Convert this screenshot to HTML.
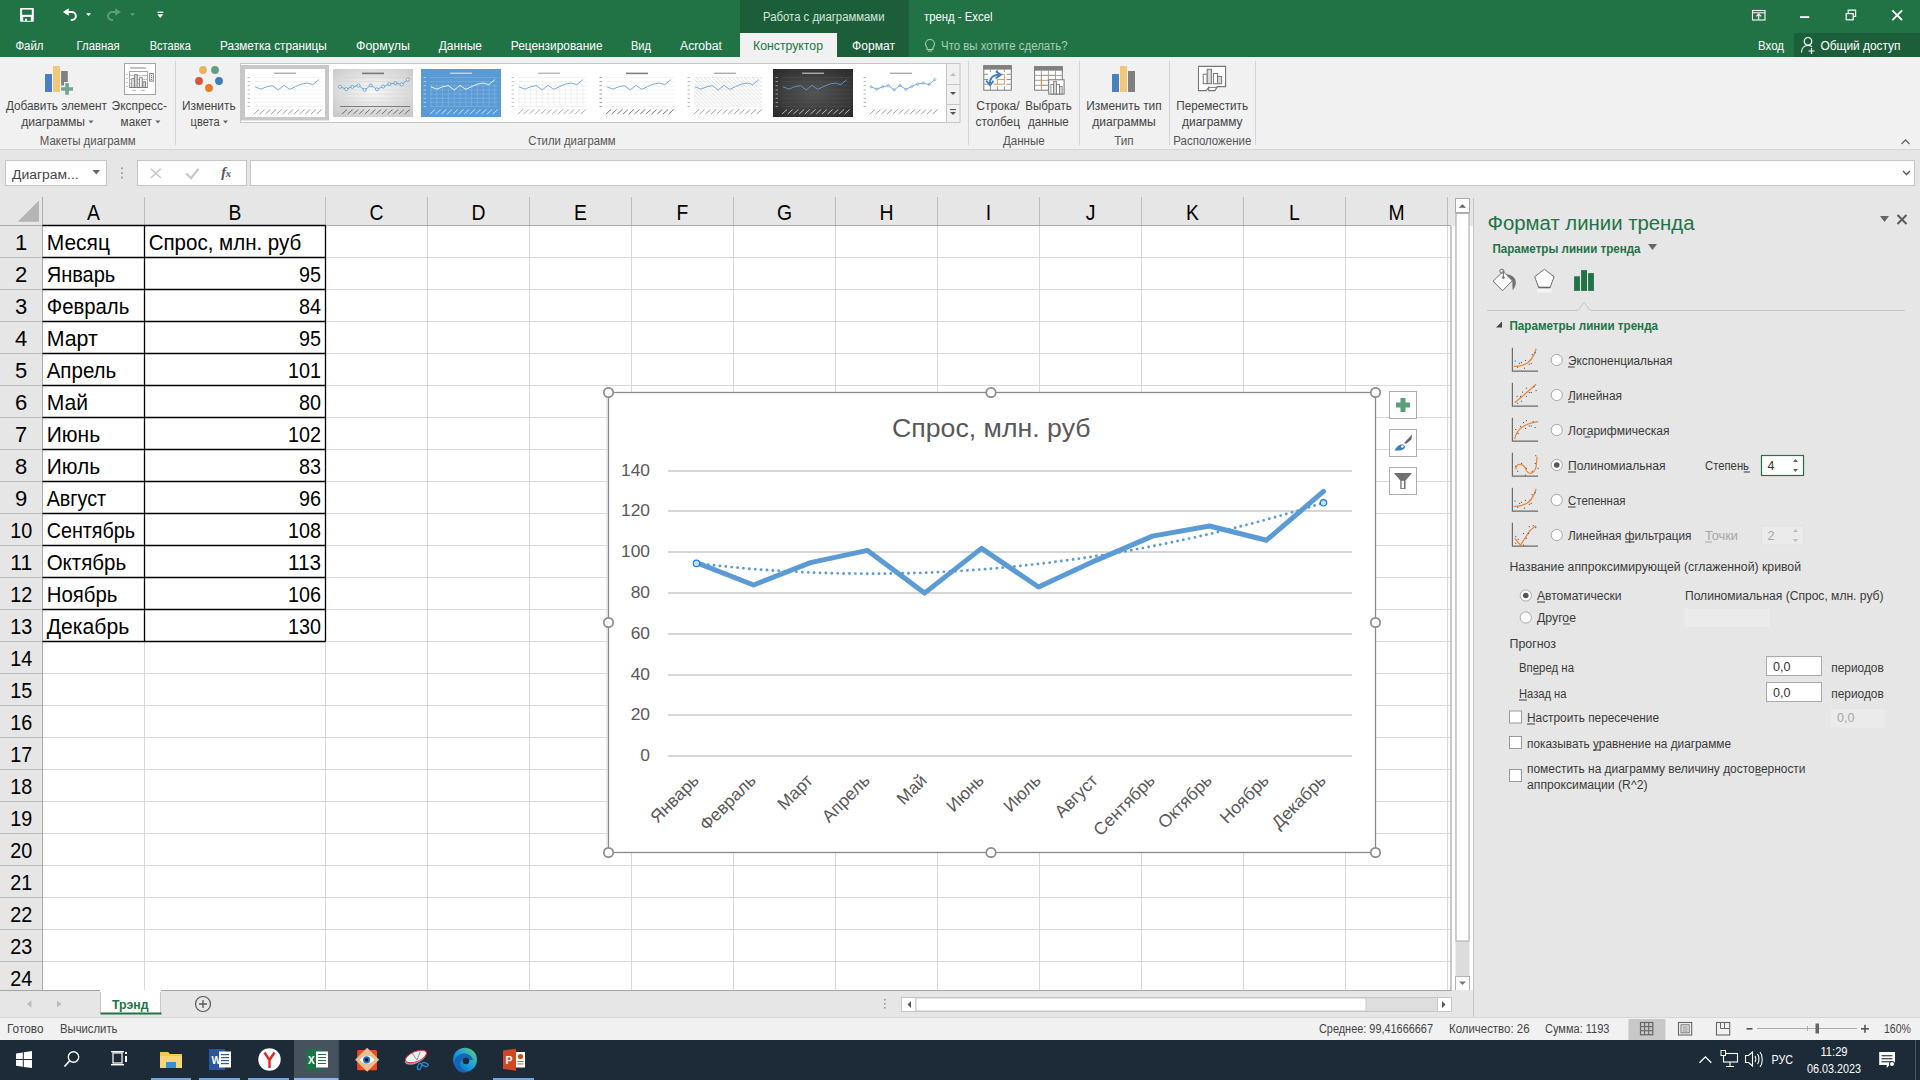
<!DOCTYPE html>
<html><head><meta charset="utf-8"><title>Excel</title>
<style>html,body{margin:0;padding:0;width:1920px;height:1080px;overflow:hidden;background:#fff}
svg{display:block;font-family:"Liberation Sans",sans-serif}</style></head>
<body><svg width="1920" height="1080" viewBox="0 0 1920 1080">
<rect x="0" y="0" width="1920" height="57" fill="#217346" />
<rect x="740" y="0" width="169" height="57" fill="#1b5e39" />
<rect x="1794" y="33" width="126" height="24" fill="#1b5e39" />
<rect x="740" y="33" width="97" height="24" fill="#f1f1f1" />
<rect x="20.1" y="8" width="13.7" height="13.7" fill="#fff" rx="0.8"/>
<rect x="22.1" y="9.6" width="9.7" height="5.2" fill="#217346" />
<rect x="23.2" y="16.9" width="7.7" height="3.9" fill="#217346" />
<rect x="25" y="18.7" width="1.9" height="2.2" fill="#fff" />
<path d="M62.9 11.9l5.8-3.7v7.5z" fill="#fff" />
<path d="M67.5 11.9h4.3a4.05 4.05 0 0 1 0 8.1h-1" fill="none" stroke="#fff" stroke-width="2" />
<path d="M86 13.3h5.1l-2.55 2.6z" fill="#fff" />
<path d="M121 11.9l-5.8-3.7v7.5z" fill="#5c9f77" />
<path d="M116.4 11.9h-4.3a4.05 4.05 0 0 0 0 8.1h1" fill="none" stroke="#5c9f77" stroke-width="2" />
<path d="M129.9 13.3h5.1l-2.55 2.6z" fill="#5c9f77" />
<rect x="157.5" y="11.6" width="5.8" height="1.3" fill="#fff" />
<path d="M157.3 14.3h6l-3 3.6z" fill="#fff" />
<text x="763" y="21" font-size="12" fill="#d5e8dc" textLength="121.5" lengthAdjust="spacingAndGlyphs" >Работа с диаграммами</text>
<text x="924" y="21" font-size="12" fill="#fff" textLength="68.5" lengthAdjust="spacingAndGlyphs" >тренд - Excel</text>
<rect x="1752.5" y="10.5" width="12.5" height="9.5" fill="none" stroke="#fff" stroke-width="1.1" />
<line x1="1752.5" y1="12.8" x2="1765" y2="12.8" stroke="#fff" stroke-width="1" />
<path d="M1758.7 19.5v-5M1756.3 16.3l2.4-2.5 2.4 2.5" fill="none" stroke="#fff" stroke-width="1.1" />
<rect x="1800" y="16.2" width="9.2" height="1.8" fill="#fff" />
<rect x="1846.2" y="13.6" width="7" height="6.2" fill="none" stroke="#fff" stroke-width="1.2" />
<path d="M1848.2 13.2v-3h7.4v6.2h-2.2" fill="none" stroke="#fff" stroke-width="1.2" />
<path d="M1892.3 10.3l9.8 9.8M1902.1 10.3l-9.8 9.8" fill="none" stroke="#fff" stroke-width="1.9" />
<text x="15.4" y="49.5" font-size="12.5" fill="#fff" textLength="28.1" lengthAdjust="spacingAndGlyphs" >Файл</text>
<text x="76.6" y="49.5" font-size="12.5" fill="#fff" textLength="43.0" lengthAdjust="spacingAndGlyphs" >Главная</text>
<text x="149.7" y="49.5" font-size="12.5" fill="#fff" textLength="41.1" lengthAdjust="spacingAndGlyphs" >Вставка</text>
<text x="220" y="49.5" font-size="12.5" fill="#fff" textLength="106.8" lengthAdjust="spacingAndGlyphs" >Разметка страницы</text>
<text x="356" y="49.5" font-size="12.5" fill="#fff" textLength="54" lengthAdjust="spacingAndGlyphs" >Формулы</text>
<text x="438.75" y="49.5" font-size="12.5" fill="#fff" textLength="43.2" lengthAdjust="spacingAndGlyphs" >Данные</text>
<text x="510.75" y="49.5" font-size="12.5" fill="#fff" textLength="91.8" lengthAdjust="spacingAndGlyphs" >Рецензирование</text>
<text x="631" y="49.5" font-size="12.5" fill="#fff" textLength="20" lengthAdjust="spacingAndGlyphs" >Вид</text>
<text x="680" y="49.5" font-size="12.5" fill="#fff" textLength="42" lengthAdjust="spacingAndGlyphs" >Acrobat</text>
<text x="852" y="49.5" font-size="12.5" fill="#fff" textLength="43" lengthAdjust="spacingAndGlyphs" >Формат</text>
<text x="753" y="49.5" font-size="12.5" fill="#217346" textLength="70" lengthAdjust="spacingAndGlyphs" >Конструктор</text>
<path d="M930 39.5a4.5 4.5 0 0 1 4.5 4.5c0 1.8-1.3 2.6-1.6 4v1.5h-5.8v-1.5c-.3-1.4-1.6-2.2-1.6-4a4.5 4.5 0 0 1 4.5-4.5zM927.8 51h4.4" fill="none" stroke="#a9cdb7" stroke-width="1.1" />
<text x="941" y="49.5" font-size="12.5" fill="#a9cdb7" textLength="126.5" lengthAdjust="spacingAndGlyphs" >Что вы хотите сделать?</text>
<text x="1758" y="49.5" font-size="12.5" fill="#fff" textLength="26" lengthAdjust="spacingAndGlyphs" >Вход</text>
<path d="M1808 37.5a3.8 3.8 0 1 1 0 7.6a3.8 3.8 0 1 1 0-7.6M1801.5 52.5c0-4 2.5-7 6.5-7 2 0 3 .5 4 1.3M1811.5 48v6M1808.5 51h6" fill="none" stroke="#fff" stroke-width="1.2" />
<text x="1820.5" y="49.5" font-size="12.5" fill="#fff" textLength="80" lengthAdjust="spacingAndGlyphs" >Общий доступ</text>
<rect x="0" y="57" width="1920" height="92" fill="#f1f1f1" />
<line x1="0" y1="149.5" x2="1920" y2="149.5" stroke="#d6d6d6" stroke-width="1" />
<line x1="175.5" y1="61" x2="175.5" y2="145" stroke="#d4d4d4" stroke-width="1" />
<line x1="968.5" y1="61" x2="968.5" y2="145" stroke="#d4d4d4" stroke-width="1" />
<line x1="1079.5" y1="61" x2="1079.5" y2="145" stroke="#d4d4d4" stroke-width="1" />
<line x1="1169.5" y1="61" x2="1169.5" y2="145" stroke="#d4d4d4" stroke-width="1" />
<line x1="1255.5" y1="61" x2="1255.5" y2="145" stroke="#d4d4d4" stroke-width="1" />
<rect x="45" y="74" width="7" height="18" fill="#4a7fc0" />
<rect x="53" y="66" width="7" height="26" fill="#f0c87c" />
<path d="M61.1 71.1h6.7v10.8h-3.8v3.7h-2.9z" fill="#808080" />
<rect x="65.2" y="83.1" width="3.7" height="11.7" fill="#72a692" />
<rect x="61.1" y="87.2" width="11.9" height="3.5" fill="#72a692" />
<text x="5.9" y="109.5" font-size="12" fill="#444" textLength="101.0" lengthAdjust="spacingAndGlyphs" >Добавить элемент</text>
<text x="21.25" y="125.5" font-size="12" fill="#444" textLength="63.8" lengthAdjust="spacingAndGlyphs" >диаграммы</text>
<path d="M88.5 120.5h5.0l-2.5 3.0z" fill="#666" />
<rect x="124.5" y="63.5" width="31" height="31" fill="#fff" stroke="#a6a6a6" stroke-width="1" />
<rect x="130.2" y="67.2" width="15.5" height="1.5" fill="#aaa" />
<rect x="129.5" y="71.5" width="18" height="16" fill="none" stroke="#a6a6a6" stroke-width="1" />
<line x1="130" y1="75.6" x2="147" y2="75.6" stroke="#aaa" stroke-width="0.8" />
<line x1="130" y1="79.4" x2="147" y2="79.4" stroke="#aaa" stroke-width="0.8" />
<line x1="130" y1="83.3" x2="147" y2="83.3" stroke="#aaa" stroke-width="0.8" />
<line x1="129.4" y1="87.4" x2="147.4" y2="87.4" stroke="#777" stroke-width="1" />
<rect x="131.8" y="78.6" width="2.4" height="8.8" fill="#fff" stroke="#777" stroke-width="0.9" />
<rect x="134.6" y="74.7" width="2.6" height="12.7" fill="#ddd" stroke="#777" stroke-width="0.9" />
<rect x="139.6" y="77.7" width="2.6" height="9.7" fill="#fff" stroke="#777" stroke-width="0.9" />
<rect x="142.8" y="81.8" width="2.6" height="5.6" fill="#ddd" stroke="#777" stroke-width="0.9" />
<rect x="126.1" y="74.0" width="1.7" height="0.8" fill="#aaa" />
<rect x="126.1" y="78.1" width="1.7" height="0.8" fill="#aaa" />
<rect x="126.1" y="82.0" width="1.7" height="0.8" fill="#aaa" />
<rect x="126.1" y="86.1" width="1.7" height="0.8" fill="#aaa" />
<rect x="132.2" y="90" width="3.7" height="0.8" fill="#aaa" />
<rect x="141.1" y="90" width="3.7" height="0.8" fill="#aaa" />
<rect x="149.7" y="73.5" width="3.6" height="7.6" fill="#fff" stroke="#777" stroke-width="0.9" />
<circle cx="151.5" cy="75.4" r="0.55" fill="#666"/>
<circle cx="151.5" cy="77.4" r="0.55" fill="#666"/>
<circle cx="151.5" cy="79.4" r="0.55" fill="#666"/>
<text x="111.6" y="109.5" font-size="12" fill="#444" textLength="55.4" lengthAdjust="spacingAndGlyphs" >Экспресс-</text>
<text x="120.6" y="125.5" font-size="12" fill="#444" textLength="31.3" lengthAdjust="spacingAndGlyphs" >макет</text>
<path d="M155.4 120.5h5.0l-2.5 3.0z" fill="#666" />
<circle cx="203" cy="70" r="3.9" fill="#eab15f"/>
<circle cx="215" cy="70" r="3.9" fill="#5f9f84"/>
<circle cx="199" cy="81" r="3.9" fill="#d9543a"/>
<circle cx="219" cy="81" r="3.9" fill="#3f7bc1"/>
<circle cx="209" cy="88" r="3.9" fill="#e97a23"/>
<text x="182" y="109.5" font-size="12" fill="#444" textLength="53.6" lengthAdjust="spacingAndGlyphs" >Изменить</text>
<text x="190.6" y="125.5" font-size="12" fill="#444" textLength="29.0" lengthAdjust="spacingAndGlyphs" >цвета</text>
<path d="M223 120.5h5l-2.5 3.0z" fill="#666" />
<text x="39.75" y="145" font-size="12" fill="#555" textLength="95.9" lengthAdjust="spacingAndGlyphs" >Макеты диаграмм</text>
<text x="528.25" y="145" font-size="12" fill="#555" textLength="87.3" lengthAdjust="spacingAndGlyphs" >Стили диаграмм</text>
<text x="1003" y="145" font-size="12" fill="#555" textLength="41.7" lengthAdjust="spacingAndGlyphs" >Данные</text>
<text x="1114.2" y="145" font-size="12" fill="#555" textLength="19.5" lengthAdjust="spacingAndGlyphs" >Тип</text>
<text x="1173.3" y="145" font-size="12" fill="#555" textLength="78" lengthAdjust="spacingAndGlyphs" >Расположение</text>
<rect x="240.5" y="63.5" width="719" height="59" fill="#fff" stroke="#c6c6c6" stroke-width="1" />
<rect x="946.5" y="63.5" width="13.5" height="59" fill="#f1f1f1" stroke="#c6c6c6" stroke-width="1" />
<line x1="946.5" y1="84.5" x2="960" y2="84.5" stroke="#c6c6c6" stroke-width="1" />
<line x1="946.5" y1="104.5" x2="960" y2="104.5" stroke="#c6c6c6" stroke-width="1" />
<path d="M950 76h6l-3-3z" fill="#bbb" />
<path d="M950 92h6l-3 3z" fill="#555" />
<rect x="950" y="109" width="6" height="1.1" fill="#555" />
<path d="M950 112h6l-3 3z" fill="#555" />
<rect x="241" y="65" width="88" height="55.5" fill="#c8c8c8" />
<defs><radialGradient id="g2" cx="50%" cy="45%" r="70%"><stop offset="0" stop-color="#fafafa"/><stop offset="1" stop-color="#c8c8c8"/></radialGradient><radialGradient id="g7" cx="50%" cy="50%" r="70%"><stop offset="0" stop-color="#555"/><stop offset="1" stop-color="#2a2a2a"/></radialGradient></defs>
<rect x="245" y="69" width="80" height="48" fill="#fff" />
<rect x="274.0" y="72.6" width="22" height="1.3" fill="#888" opacity="0.75"/>
<line x1="254" y1="106.5" x2="322" y2="106.5" stroke="#e6e6e6" stroke-width="0.5" />
<line x1="254" y1="102.35714285714286" x2="322" y2="102.35714285714286" stroke="#e6e6e6" stroke-width="0.5" />
<line x1="254" y1="98.21428571428571" x2="322" y2="98.21428571428571" stroke="#e6e6e6" stroke-width="0.5" />
<line x1="254" y1="94.07142857142857" x2="322" y2="94.07142857142857" stroke="#e6e6e6" stroke-width="0.5" />
<line x1="254" y1="89.92857142857143" x2="322" y2="89.92857142857143" stroke="#e6e6e6" stroke-width="0.5" />
<line x1="254" y1="85.78571428571428" x2="322" y2="85.78571428571428" stroke="#e6e6e6" stroke-width="0.5" />
<line x1="254" y1="81.64285714285714" x2="322" y2="81.64285714285714" stroke="#e6e6e6" stroke-width="0.5" />
<line x1="254" y1="77.5" x2="322" y2="77.5" stroke="#e6e6e6" stroke-width="0.5" />
<polyline points="255.0,86.8 260.8,89.1 266.6,86.8 272.4,85.6 278.2,89.9 284.0,85.4 289.8,89.3 295.6,86.6 301.4,84.1 307.2,83.1 313.0,84.5 318.8,79.6" fill="none" stroke="#6aa1d8" stroke-width="0.9"/>
<line x1="254.0" y1="114" x2="259.0" y2="109.5" stroke="#888" stroke-width="0.8" />
<line x1="259.7" y1="114" x2="264.7" y2="109.5" stroke="#888" stroke-width="0.8" />
<line x1="265.4" y1="114" x2="270.4" y2="109.5" stroke="#888" stroke-width="0.8" />
<line x1="271.1" y1="114" x2="276.1" y2="109.5" stroke="#888" stroke-width="0.8" />
<line x1="276.8" y1="114" x2="281.8" y2="109.5" stroke="#888" stroke-width="0.8" />
<line x1="282.5" y1="114" x2="287.5" y2="109.5" stroke="#888" stroke-width="0.8" />
<line x1="288.2" y1="114" x2="293.2" y2="109.5" stroke="#888" stroke-width="0.8" />
<line x1="293.9" y1="114" x2="298.9" y2="109.5" stroke="#888" stroke-width="0.8" />
<line x1="299.6" y1="114" x2="304.6" y2="109.5" stroke="#888" stroke-width="0.8" />
<line x1="305.3" y1="114" x2="310.3" y2="109.5" stroke="#888" stroke-width="0.8" />
<line x1="311.0" y1="114" x2="316.0" y2="109.5" stroke="#888" stroke-width="0.8" />
<line x1="316.7" y1="114" x2="321.7" y2="109.5" stroke="#888" stroke-width="0.8" />
<rect x="247.5" y="106.1" width="2.5" height="0.8" fill="#888" opacity="0.7"/>
<rect x="247.5" y="101.95714285714286" width="2.5" height="0.8" fill="#888" opacity="0.7"/>
<rect x="247.5" y="97.8142857142857" width="2.5" height="0.8" fill="#888" opacity="0.7"/>
<rect x="247.5" y="93.67142857142856" width="2.5" height="0.8" fill="#888" opacity="0.7"/>
<rect x="247.5" y="89.52857142857142" width="2.5" height="0.8" fill="#888" opacity="0.7"/>
<rect x="247.5" y="85.38571428571427" width="2.5" height="0.8" fill="#888" opacity="0.7"/>
<rect x="247.5" y="81.24285714285713" width="2.5" height="0.8" fill="#888" opacity="0.7"/>
<rect x="247.5" y="77.1" width="2.5" height="0.8" fill="#888" opacity="0.7"/>
<rect x="333" y="69" width="80" height="48" fill="url(#g2)"/>
<rect x="362.0" y="72.6" width="22" height="1.6" fill="#555" opacity="0.75"/>
<line x1="342" y1="106.5" x2="410" y2="106.5" stroke="#d0d0d0" stroke-width="0.5" />
<line x1="342" y1="102.35714285714286" x2="410" y2="102.35714285714286" stroke="#d0d0d0" stroke-width="0.5" />
<line x1="342" y1="98.21428571428571" x2="410" y2="98.21428571428571" stroke="#d0d0d0" stroke-width="0.5" />
<line x1="342" y1="94.07142857142857" x2="410" y2="94.07142857142857" stroke="#d0d0d0" stroke-width="0.5" />
<line x1="342" y1="89.92857142857143" x2="410" y2="89.92857142857143" stroke="#d0d0d0" stroke-width="0.5" />
<line x1="342" y1="85.78571428571428" x2="410" y2="85.78571428571428" stroke="#d0d0d0" stroke-width="0.5" />
<line x1="342" y1="81.64285714285714" x2="410" y2="81.64285714285714" stroke="#d0d0d0" stroke-width="0.5" />
<line x1="342" y1="77.5" x2="410" y2="77.5" stroke="#d0d0d0" stroke-width="0.5" />
<line x1="340" y1="106.5" x2="410" y2="106.5" stroke="#666" stroke-width="0.8" />
<polyline points="340.0,86.8 346.2,89.1 352.3,86.8 358.5,85.6 364.6,89.9 370.8,85.4 377.0,89.3 383.1,86.6 389.3,84.1 395.4,83.1 401.6,84.5 407.8,79.6" fill="none" stroke="#5b9bd5" stroke-width="0.9"/>
<circle cx="340.0" cy="86.8" r="1.5" fill="#fff" stroke="#5b9bd5" stroke-width="0.9"/>
<circle cx="346.2" cy="89.1" r="1.5" fill="#fff" stroke="#5b9bd5" stroke-width="0.9"/>
<circle cx="352.3" cy="86.8" r="1.5" fill="#fff" stroke="#5b9bd5" stroke-width="0.9"/>
<circle cx="358.5" cy="85.6" r="1.5" fill="#fff" stroke="#5b9bd5" stroke-width="0.9"/>
<circle cx="364.6" cy="89.9" r="1.5" fill="#fff" stroke="#5b9bd5" stroke-width="0.9"/>
<circle cx="370.8" cy="85.4" r="1.5" fill="#fff" stroke="#5b9bd5" stroke-width="0.9"/>
<circle cx="377.0" cy="89.3" r="1.5" fill="#fff" stroke="#5b9bd5" stroke-width="0.9"/>
<circle cx="383.1" cy="86.6" r="1.5" fill="#fff" stroke="#5b9bd5" stroke-width="0.9"/>
<circle cx="389.3" cy="84.1" r="1.5" fill="#fff" stroke="#5b9bd5" stroke-width="0.9"/>
<circle cx="395.4" cy="83.1" r="1.5" fill="#fff" stroke="#5b9bd5" stroke-width="0.9"/>
<circle cx="401.6" cy="84.5" r="1.5" fill="#fff" stroke="#5b9bd5" stroke-width="0.9"/>
<circle cx="407.8" cy="79.6" r="1.5" fill="#fff" stroke="#5b9bd5" stroke-width="0.9"/>
<line x1="342.0" y1="114" x2="347.0" y2="109.5" stroke="#555" stroke-width="0.8" />
<line x1="347.7" y1="114" x2="352.7" y2="109.5" stroke="#555" stroke-width="0.8" />
<line x1="353.4" y1="114" x2="358.4" y2="109.5" stroke="#555" stroke-width="0.8" />
<line x1="359.1" y1="114" x2="364.1" y2="109.5" stroke="#555" stroke-width="0.8" />
<line x1="364.8" y1="114" x2="369.8" y2="109.5" stroke="#555" stroke-width="0.8" />
<line x1="370.5" y1="114" x2="375.5" y2="109.5" stroke="#555" stroke-width="0.8" />
<line x1="376.2" y1="114" x2="381.2" y2="109.5" stroke="#555" stroke-width="0.8" />
<line x1="381.9" y1="114" x2="386.9" y2="109.5" stroke="#555" stroke-width="0.8" />
<line x1="387.6" y1="114" x2="392.6" y2="109.5" stroke="#555" stroke-width="0.8" />
<line x1="393.3" y1="114" x2="398.3" y2="109.5" stroke="#555" stroke-width="0.8" />
<line x1="399.0" y1="114" x2="404.0" y2="109.5" stroke="#555" stroke-width="0.8" />
<line x1="404.7" y1="114" x2="409.7" y2="109.5" stroke="#555" stroke-width="0.8" />
<rect x="421" y="69" width="80" height="48" fill="#5b9bd5" />
<rect x="450.0" y="72.6" width="22" height="1.3" fill="#eef" opacity="0.75"/>
<line x1="430" y1="106.5" x2="498" y2="106.5" stroke="#8cb9e4" stroke-width="0.5" />
<line x1="430" y1="102.35714285714286" x2="498" y2="102.35714285714286" stroke="#8cb9e4" stroke-width="0.5" />
<line x1="430" y1="98.21428571428571" x2="498" y2="98.21428571428571" stroke="#8cb9e4" stroke-width="0.5" />
<line x1="430" y1="94.07142857142857" x2="498" y2="94.07142857142857" stroke="#8cb9e4" stroke-width="0.5" />
<line x1="430" y1="89.92857142857143" x2="498" y2="89.92857142857143" stroke="#8cb9e4" stroke-width="0.5" />
<line x1="430" y1="85.78571428571428" x2="498" y2="85.78571428571428" stroke="#8cb9e4" stroke-width="0.5" />
<line x1="430" y1="81.64285714285714" x2="498" y2="81.64285714285714" stroke="#8cb9e4" stroke-width="0.5" />
<line x1="430" y1="77.5" x2="498" y2="77.5" stroke="#8cb9e4" stroke-width="0.5" />
<line x1="431.0" y1="84" x2="431.0" y2="106.5" stroke="#8cb9e4" stroke-width="0.5" />
<line x1="436.8" y1="84" x2="436.8" y2="106.5" stroke="#8cb9e4" stroke-width="0.5" />
<line x1="442.6" y1="84" x2="442.6" y2="106.5" stroke="#8cb9e4" stroke-width="0.5" />
<line x1="448.4" y1="84" x2="448.4" y2="106.5" stroke="#8cb9e4" stroke-width="0.5" />
<line x1="454.2" y1="84" x2="454.2" y2="106.5" stroke="#8cb9e4" stroke-width="0.5" />
<line x1="460.0" y1="84" x2="460.0" y2="106.5" stroke="#8cb9e4" stroke-width="0.5" />
<line x1="465.8" y1="84" x2="465.8" y2="106.5" stroke="#8cb9e4" stroke-width="0.5" />
<line x1="471.6" y1="84" x2="471.6" y2="106.5" stroke="#8cb9e4" stroke-width="0.5" />
<line x1="477.4" y1="84" x2="477.4" y2="106.5" stroke="#8cb9e4" stroke-width="0.5" />
<line x1="483.2" y1="84" x2="483.2" y2="106.5" stroke="#8cb9e4" stroke-width="0.5" />
<line x1="489.0" y1="84" x2="489.0" y2="106.5" stroke="#8cb9e4" stroke-width="0.5" />
<line x1="494.8" y1="84" x2="494.8" y2="106.5" stroke="#8cb9e4" stroke-width="0.5" />
<polyline points="431.0,86.8 436.8,89.1 442.6,86.8 448.4,85.6 454.2,89.9 460.0,85.4 465.8,89.3 471.6,86.6 477.4,84.1 483.2,83.1 489.0,84.5 494.8,79.6" fill="none" stroke="#fff" stroke-width="0.9"/>
<line x1="430.0" y1="114" x2="435.0" y2="109.5" stroke="#eef" stroke-width="0.8" />
<line x1="435.7" y1="114" x2="440.7" y2="109.5" stroke="#eef" stroke-width="0.8" />
<line x1="441.4" y1="114" x2="446.4" y2="109.5" stroke="#eef" stroke-width="0.8" />
<line x1="447.1" y1="114" x2="452.1" y2="109.5" stroke="#eef" stroke-width="0.8" />
<line x1="452.8" y1="114" x2="457.8" y2="109.5" stroke="#eef" stroke-width="0.8" />
<line x1="458.5" y1="114" x2="463.5" y2="109.5" stroke="#eef" stroke-width="0.8" />
<line x1="464.2" y1="114" x2="469.2" y2="109.5" stroke="#eef" stroke-width="0.8" />
<line x1="469.9" y1="114" x2="474.9" y2="109.5" stroke="#eef" stroke-width="0.8" />
<line x1="475.6" y1="114" x2="480.6" y2="109.5" stroke="#eef" stroke-width="0.8" />
<line x1="481.3" y1="114" x2="486.3" y2="109.5" stroke="#eef" stroke-width="0.8" />
<line x1="487.0" y1="114" x2="492.0" y2="109.5" stroke="#eef" stroke-width="0.8" />
<line x1="492.7" y1="114" x2="497.7" y2="109.5" stroke="#eef" stroke-width="0.8" />
<rect x="423.5" y="106.1" width="2.5" height="0.8" fill="#eef" opacity="0.7"/>
<rect x="423.5" y="101.95714285714286" width="2.5" height="0.8" fill="#eef" opacity="0.7"/>
<rect x="423.5" y="97.8142857142857" width="2.5" height="0.8" fill="#eef" opacity="0.7"/>
<rect x="423.5" y="93.67142857142856" width="2.5" height="0.8" fill="#eef" opacity="0.7"/>
<rect x="423.5" y="89.52857142857142" width="2.5" height="0.8" fill="#eef" opacity="0.7"/>
<rect x="423.5" y="85.38571428571427" width="2.5" height="0.8" fill="#eef" opacity="0.7"/>
<rect x="423.5" y="81.24285714285713" width="2.5" height="0.8" fill="#eef" opacity="0.7"/>
<rect x="423.5" y="77.1" width="2.5" height="0.8" fill="#eef" opacity="0.7"/>
<rect x="509" y="69" width="80" height="48" fill="#fff" />
<rect x="538.0" y="72.6" width="22" height="1.3" fill="#999" opacity="0.75"/>
<line x1="518" y1="106.5" x2="586" y2="106.5" stroke="#e4e4e4" stroke-width="0.5" />
<line x1="518" y1="102.35714285714286" x2="586" y2="102.35714285714286" stroke="#e4e4e4" stroke-width="0.5" />
<line x1="518" y1="98.21428571428571" x2="586" y2="98.21428571428571" stroke="#e4e4e4" stroke-width="0.5" />
<line x1="518" y1="94.07142857142857" x2="586" y2="94.07142857142857" stroke="#e4e4e4" stroke-width="0.5" />
<line x1="518" y1="89.92857142857143" x2="586" y2="89.92857142857143" stroke="#e4e4e4" stroke-width="0.5" />
<line x1="518" y1="85.78571428571428" x2="586" y2="85.78571428571428" stroke="#e4e4e4" stroke-width="0.5" />
<line x1="518" y1="81.64285714285714" x2="586" y2="81.64285714285714" stroke="#e4e4e4" stroke-width="0.5" />
<line x1="518" y1="77.5" x2="586" y2="77.5" stroke="#e4e4e4" stroke-width="0.5" />
<line x1="519.0" y1="84" x2="519.0" y2="106.5" stroke="#e4e4e4" stroke-width="0.5" />
<line x1="524.8" y1="84" x2="524.8" y2="106.5" stroke="#e4e4e4" stroke-width="0.5" />
<line x1="530.6" y1="84" x2="530.6" y2="106.5" stroke="#e4e4e4" stroke-width="0.5" />
<line x1="536.4" y1="84" x2="536.4" y2="106.5" stroke="#e4e4e4" stroke-width="0.5" />
<line x1="542.2" y1="84" x2="542.2" y2="106.5" stroke="#e4e4e4" stroke-width="0.5" />
<line x1="548.0" y1="84" x2="548.0" y2="106.5" stroke="#e4e4e4" stroke-width="0.5" />
<line x1="553.8" y1="84" x2="553.8" y2="106.5" stroke="#e4e4e4" stroke-width="0.5" />
<line x1="559.6" y1="84" x2="559.6" y2="106.5" stroke="#e4e4e4" stroke-width="0.5" />
<line x1="565.4" y1="84" x2="565.4" y2="106.5" stroke="#e4e4e4" stroke-width="0.5" />
<line x1="571.2" y1="84" x2="571.2" y2="106.5" stroke="#e4e4e4" stroke-width="0.5" />
<line x1="577.0" y1="84" x2="577.0" y2="106.5" stroke="#e4e4e4" stroke-width="0.5" />
<line x1="582.8" y1="84" x2="582.8" y2="106.5" stroke="#e4e4e4" stroke-width="0.5" />
<polyline points="519.0,86.8 524.8,89.1 530.6,86.8 536.4,85.6 542.2,89.9 548.0,85.4 553.8,89.3 559.6,86.6 565.4,84.1 571.2,83.1 577.0,84.5 582.8,79.6" fill="none" stroke="#6aa1d8" stroke-width="0.9"/>
<line x1="518.0" y1="114" x2="523.0" y2="109.5" stroke="#999" stroke-width="0.8" />
<line x1="523.7" y1="114" x2="528.7" y2="109.5" stroke="#999" stroke-width="0.8" />
<line x1="529.4" y1="114" x2="534.4" y2="109.5" stroke="#999" stroke-width="0.8" />
<line x1="535.1" y1="114" x2="540.1" y2="109.5" stroke="#999" stroke-width="0.8" />
<line x1="540.8" y1="114" x2="545.8" y2="109.5" stroke="#999" stroke-width="0.8" />
<line x1="546.5" y1="114" x2="551.5" y2="109.5" stroke="#999" stroke-width="0.8" />
<line x1="552.2" y1="114" x2="557.2" y2="109.5" stroke="#999" stroke-width="0.8" />
<line x1="557.9" y1="114" x2="562.9" y2="109.5" stroke="#999" stroke-width="0.8" />
<line x1="563.6" y1="114" x2="568.6" y2="109.5" stroke="#999" stroke-width="0.8" />
<line x1="569.3" y1="114" x2="574.3" y2="109.5" stroke="#999" stroke-width="0.8" />
<line x1="575.0" y1="114" x2="580.0" y2="109.5" stroke="#999" stroke-width="0.8" />
<line x1="580.7" y1="114" x2="585.7" y2="109.5" stroke="#999" stroke-width="0.8" />
<rect x="511.5" y="106.1" width="2.5" height="0.8" fill="#999" opacity="0.7"/>
<rect x="511.5" y="101.95714285714286" width="2.5" height="0.8" fill="#999" opacity="0.7"/>
<rect x="511.5" y="97.8142857142857" width="2.5" height="0.8" fill="#999" opacity="0.7"/>
<rect x="511.5" y="93.67142857142856" width="2.5" height="0.8" fill="#999" opacity="0.7"/>
<rect x="511.5" y="89.52857142857142" width="2.5" height="0.8" fill="#999" opacity="0.7"/>
<rect x="511.5" y="85.38571428571427" width="2.5" height="0.8" fill="#999" opacity="0.7"/>
<rect x="511.5" y="81.24285714285713" width="2.5" height="0.8" fill="#999" opacity="0.7"/>
<rect x="511.5" y="77.1" width="2.5" height="0.8" fill="#999" opacity="0.7"/>
<rect x="597" y="69" width="80" height="48" fill="#fff" />
<rect x="626.0" y="72.6" width="22" height="1.6" fill="#555" opacity="0.75"/>
<line x1="606" y1="106.5" x2="674" y2="106.5" stroke="#e6e6e6" stroke-width="0.5" />
<line x1="606" y1="102.35714285714286" x2="674" y2="102.35714285714286" stroke="#e6e6e6" stroke-width="0.5" />
<line x1="606" y1="98.21428571428571" x2="674" y2="98.21428571428571" stroke="#e6e6e6" stroke-width="0.5" />
<line x1="606" y1="94.07142857142857" x2="674" y2="94.07142857142857" stroke="#e6e6e6" stroke-width="0.5" />
<line x1="606" y1="89.92857142857143" x2="674" y2="89.92857142857143" stroke="#e6e6e6" stroke-width="0.5" />
<line x1="606" y1="85.78571428571428" x2="674" y2="85.78571428571428" stroke="#e6e6e6" stroke-width="0.5" />
<line x1="606" y1="81.64285714285714" x2="674" y2="81.64285714285714" stroke="#e6e6e6" stroke-width="0.5" />
<line x1="606" y1="77.5" x2="674" y2="77.5" stroke="#e6e6e6" stroke-width="0.5" />
<polyline points="607.0,86.8 612.8,89.1 618.6,86.8 624.4,85.6 630.2,89.9 636.0,85.4 641.8,89.3 647.6,86.6 653.4,84.1 659.2,83.1 665.0,84.5 670.8,79.6" fill="none" stroke="#6aa1d8" stroke-width="0.9"/>
<line x1="606.0" y1="114" x2="611.0" y2="109.5" stroke="#555" stroke-width="0.8" />
<line x1="611.7" y1="114" x2="616.7" y2="109.5" stroke="#555" stroke-width="0.8" />
<line x1="617.4" y1="114" x2="622.4" y2="109.5" stroke="#555" stroke-width="0.8" />
<line x1="623.1" y1="114" x2="628.1" y2="109.5" stroke="#555" stroke-width="0.8" />
<line x1="628.8" y1="114" x2="633.8" y2="109.5" stroke="#555" stroke-width="0.8" />
<line x1="634.5" y1="114" x2="639.5" y2="109.5" stroke="#555" stroke-width="0.8" />
<line x1="640.2" y1="114" x2="645.2" y2="109.5" stroke="#555" stroke-width="0.8" />
<line x1="645.9" y1="114" x2="650.9" y2="109.5" stroke="#555" stroke-width="0.8" />
<line x1="651.6" y1="114" x2="656.6" y2="109.5" stroke="#555" stroke-width="0.8" />
<line x1="657.3" y1="114" x2="662.3" y2="109.5" stroke="#555" stroke-width="0.8" />
<line x1="663.0" y1="114" x2="668.0" y2="109.5" stroke="#555" stroke-width="0.8" />
<line x1="668.7" y1="114" x2="673.7" y2="109.5" stroke="#555" stroke-width="0.8" />
<rect x="599.5" y="106.1" width="2.5" height="0.8" fill="#555" opacity="0.7"/>
<rect x="599.5" y="101.95714285714286" width="2.5" height="0.8" fill="#555" opacity="0.7"/>
<rect x="599.5" y="97.8142857142857" width="2.5" height="0.8" fill="#555" opacity="0.7"/>
<rect x="599.5" y="93.67142857142856" width="2.5" height="0.8" fill="#555" opacity="0.7"/>
<rect x="599.5" y="89.52857142857142" width="2.5" height="0.8" fill="#555" opacity="0.7"/>
<rect x="599.5" y="85.38571428571427" width="2.5" height="0.8" fill="#555" opacity="0.7"/>
<rect x="599.5" y="81.24285714285713" width="2.5" height="0.8" fill="#555" opacity="0.7"/>
<rect x="599.5" y="77.1" width="2.5" height="0.8" fill="#555" opacity="0.7"/>
<rect x="685" y="69" width="80" height="48" fill="#fff" />
<rect x="714.0" y="72.6" width="22" height="1.3" fill="#888" opacity="0.75"/>
<line x1="694" y1="106.5" x2="762" y2="106.5" stroke="#e6e6e6" stroke-width="0.5" />
<line x1="694" y1="102.35714285714286" x2="762" y2="102.35714285714286" stroke="#e6e6e6" stroke-width="0.5" />
<line x1="694" y1="98.21428571428571" x2="762" y2="98.21428571428571" stroke="#e6e6e6" stroke-width="0.5" />
<line x1="694" y1="94.07142857142857" x2="762" y2="94.07142857142857" stroke="#e6e6e6" stroke-width="0.5" />
<line x1="694" y1="89.92857142857143" x2="762" y2="89.92857142857143" stroke="#e6e6e6" stroke-width="0.5" />
<line x1="694" y1="85.78571428571428" x2="762" y2="85.78571428571428" stroke="#e6e6e6" stroke-width="0.5" />
<line x1="694" y1="81.64285714285714" x2="762" y2="81.64285714285714" stroke="#e6e6e6" stroke-width="0.5" />
<line x1="694" y1="77.5" x2="762" y2="77.5" stroke="#e6e6e6" stroke-width="0.5" />
<clipPath id="hc685"><rect x="694" y="77" width="68" height="29.5"/></clipPath><g clip-path="url(#hc685)">
<line x1="664" y1="77" x2="694" y2="106.5" stroke="#c4c4c4" stroke-width="0.45" />
<line x1="668" y1="77" x2="698" y2="106.5" stroke="#c4c4c4" stroke-width="0.45" />
<line x1="672" y1="77" x2="702" y2="106.5" stroke="#c4c4c4" stroke-width="0.45" />
<line x1="676" y1="77" x2="706" y2="106.5" stroke="#c4c4c4" stroke-width="0.45" />
<line x1="680" y1="77" x2="710" y2="106.5" stroke="#c4c4c4" stroke-width="0.45" />
<line x1="684" y1="77" x2="714" y2="106.5" stroke="#c4c4c4" stroke-width="0.45" />
<line x1="688" y1="77" x2="718" y2="106.5" stroke="#c4c4c4" stroke-width="0.45" />
<line x1="692" y1="77" x2="722" y2="106.5" stroke="#c4c4c4" stroke-width="0.45" />
<line x1="696" y1="77" x2="726" y2="106.5" stroke="#c4c4c4" stroke-width="0.45" />
<line x1="700" y1="77" x2="730" y2="106.5" stroke="#c4c4c4" stroke-width="0.45" />
<line x1="704" y1="77" x2="734" y2="106.5" stroke="#c4c4c4" stroke-width="0.45" />
<line x1="708" y1="77" x2="738" y2="106.5" stroke="#c4c4c4" stroke-width="0.45" />
<line x1="712" y1="77" x2="742" y2="106.5" stroke="#c4c4c4" stroke-width="0.45" />
<line x1="716" y1="77" x2="746" y2="106.5" stroke="#c4c4c4" stroke-width="0.45" />
<line x1="720" y1="77" x2="750" y2="106.5" stroke="#c4c4c4" stroke-width="0.45" />
<line x1="724" y1="77" x2="754" y2="106.5" stroke="#c4c4c4" stroke-width="0.45" />
<line x1="728" y1="77" x2="758" y2="106.5" stroke="#c4c4c4" stroke-width="0.45" />
<line x1="732" y1="77" x2="762" y2="106.5" stroke="#c4c4c4" stroke-width="0.45" />
<line x1="736" y1="77" x2="766" y2="106.5" stroke="#c4c4c4" stroke-width="0.45" />
<line x1="740" y1="77" x2="770" y2="106.5" stroke="#c4c4c4" stroke-width="0.45" />
<line x1="744" y1="77" x2="774" y2="106.5" stroke="#c4c4c4" stroke-width="0.45" />
<line x1="748" y1="77" x2="778" y2="106.5" stroke="#c4c4c4" stroke-width="0.45" />
<line x1="752" y1="77" x2="782" y2="106.5" stroke="#c4c4c4" stroke-width="0.45" />
<line x1="756" y1="77" x2="786" y2="106.5" stroke="#c4c4c4" stroke-width="0.45" />
<line x1="760" y1="77" x2="790" y2="106.5" stroke="#c4c4c4" stroke-width="0.45" />
</g>
<polyline points="695.0,86.8 700.8,89.1 706.6,86.8 712.4,85.6 718.2,89.9 724.0,85.4 729.8,89.3 735.6,86.6 741.4,84.1 747.2,83.1 753.0,84.5 758.8,79.6" fill="none" stroke="#6aa1d8" stroke-width="0.9"/>
<line x1="694.0" y1="114" x2="699.0" y2="109.5" stroke="#888" stroke-width="0.8" />
<line x1="699.7" y1="114" x2="704.7" y2="109.5" stroke="#888" stroke-width="0.8" />
<line x1="705.4" y1="114" x2="710.4" y2="109.5" stroke="#888" stroke-width="0.8" />
<line x1="711.1" y1="114" x2="716.1" y2="109.5" stroke="#888" stroke-width="0.8" />
<line x1="716.8" y1="114" x2="721.8" y2="109.5" stroke="#888" stroke-width="0.8" />
<line x1="722.5" y1="114" x2="727.5" y2="109.5" stroke="#888" stroke-width="0.8" />
<line x1="728.2" y1="114" x2="733.2" y2="109.5" stroke="#888" stroke-width="0.8" />
<line x1="733.9" y1="114" x2="738.9" y2="109.5" stroke="#888" stroke-width="0.8" />
<line x1="739.6" y1="114" x2="744.6" y2="109.5" stroke="#888" stroke-width="0.8" />
<line x1="745.3" y1="114" x2="750.3" y2="109.5" stroke="#888" stroke-width="0.8" />
<line x1="751.0" y1="114" x2="756.0" y2="109.5" stroke="#888" stroke-width="0.8" />
<line x1="756.7" y1="114" x2="761.7" y2="109.5" stroke="#888" stroke-width="0.8" />
<rect x="687.5" y="106.1" width="2.5" height="0.8" fill="#888" opacity="0.7"/>
<rect x="687.5" y="101.95714285714286" width="2.5" height="0.8" fill="#888" opacity="0.7"/>
<rect x="687.5" y="97.8142857142857" width="2.5" height="0.8" fill="#888" opacity="0.7"/>
<rect x="687.5" y="93.67142857142856" width="2.5" height="0.8" fill="#888" opacity="0.7"/>
<rect x="687.5" y="89.52857142857142" width="2.5" height="0.8" fill="#888" opacity="0.7"/>
<rect x="687.5" y="85.38571428571427" width="2.5" height="0.8" fill="#888" opacity="0.7"/>
<rect x="687.5" y="81.24285714285713" width="2.5" height="0.8" fill="#888" opacity="0.7"/>
<rect x="687.5" y="77.1" width="2.5" height="0.8" fill="#888" opacity="0.7"/>
<rect x="773" y="69" width="80" height="48" fill="url(#g7)"/>
<rect x="802.0" y="72.6" width="22" height="1.3" fill="#ddd" opacity="0.75"/>
<line x1="782" y1="106.5" x2="850" y2="106.5" stroke="#555" stroke-width="0.5" />
<line x1="782" y1="102.35714285714286" x2="850" y2="102.35714285714286" stroke="#555" stroke-width="0.5" />
<line x1="782" y1="98.21428571428571" x2="850" y2="98.21428571428571" stroke="#555" stroke-width="0.5" />
<line x1="782" y1="94.07142857142857" x2="850" y2="94.07142857142857" stroke="#555" stroke-width="0.5" />
<line x1="782" y1="89.92857142857143" x2="850" y2="89.92857142857143" stroke="#555" stroke-width="0.5" />
<line x1="782" y1="85.78571428571428" x2="850" y2="85.78571428571428" stroke="#555" stroke-width="0.5" />
<line x1="782" y1="81.64285714285714" x2="850" y2="81.64285714285714" stroke="#555" stroke-width="0.5" />
<line x1="782" y1="77.5" x2="850" y2="77.5" stroke="#555" stroke-width="0.5" />
<polyline points="783.0,86.8 788.8,89.1 794.6,86.8 800.4,85.6 806.2,89.9 812.0,85.4 817.8,89.3 823.6,86.6 829.4,84.1 835.2,83.1 841.0,84.5 846.8,79.6" fill="none" stroke="#5b9bd5" stroke-width="0.9"/>
<line x1="782.0" y1="114" x2="787.0" y2="109.5" stroke="#ddd" stroke-width="0.8" />
<line x1="787.7" y1="114" x2="792.7" y2="109.5" stroke="#ddd" stroke-width="0.8" />
<line x1="793.4" y1="114" x2="798.4" y2="109.5" stroke="#ddd" stroke-width="0.8" />
<line x1="799.1" y1="114" x2="804.1" y2="109.5" stroke="#ddd" stroke-width="0.8" />
<line x1="804.8" y1="114" x2="809.8" y2="109.5" stroke="#ddd" stroke-width="0.8" />
<line x1="810.5" y1="114" x2="815.5" y2="109.5" stroke="#ddd" stroke-width="0.8" />
<line x1="816.2" y1="114" x2="821.2" y2="109.5" stroke="#ddd" stroke-width="0.8" />
<line x1="821.9" y1="114" x2="826.9" y2="109.5" stroke="#ddd" stroke-width="0.8" />
<line x1="827.6" y1="114" x2="832.6" y2="109.5" stroke="#ddd" stroke-width="0.8" />
<line x1="833.3" y1="114" x2="838.3" y2="109.5" stroke="#ddd" stroke-width="0.8" />
<line x1="839.0" y1="114" x2="844.0" y2="109.5" stroke="#ddd" stroke-width="0.8" />
<line x1="844.7" y1="114" x2="849.7" y2="109.5" stroke="#ddd" stroke-width="0.8" />
<rect x="775.5" y="106.1" width="2.5" height="0.8" fill="#ddd" opacity="0.7"/>
<rect x="775.5" y="101.95714285714286" width="2.5" height="0.8" fill="#ddd" opacity="0.7"/>
<rect x="775.5" y="97.8142857142857" width="2.5" height="0.8" fill="#ddd" opacity="0.7"/>
<rect x="775.5" y="93.67142857142856" width="2.5" height="0.8" fill="#ddd" opacity="0.7"/>
<rect x="775.5" y="89.52857142857142" width="2.5" height="0.8" fill="#ddd" opacity="0.7"/>
<rect x="775.5" y="85.38571428571427" width="2.5" height="0.8" fill="#ddd" opacity="0.7"/>
<rect x="775.5" y="81.24285714285713" width="2.5" height="0.8" fill="#ddd" opacity="0.7"/>
<rect x="775.5" y="77.1" width="2.5" height="0.8" fill="#ddd" opacity="0.7"/>
<rect x="861" y="69" width="80" height="48" fill="#fff" />
<rect x="890.0" y="72.6" width="22" height="1.3" fill="#888" opacity="0.75"/>
<line x1="870" y1="106.5" x2="938" y2="106.5" stroke="#fff" stroke-width="0.5" />
<line x1="870" y1="102.35714285714286" x2="938" y2="102.35714285714286" stroke="#fff" stroke-width="0.5" />
<line x1="870" y1="98.21428571428571" x2="938" y2="98.21428571428571" stroke="#fff" stroke-width="0.5" />
<line x1="870" y1="94.07142857142857" x2="938" y2="94.07142857142857" stroke="#fff" stroke-width="0.5" />
<line x1="870" y1="89.92857142857143" x2="938" y2="89.92857142857143" stroke="#fff" stroke-width="0.5" />
<line x1="870" y1="85.78571428571428" x2="938" y2="85.78571428571428" stroke="#fff" stroke-width="0.5" />
<line x1="870" y1="81.64285714285714" x2="938" y2="81.64285714285714" stroke="#fff" stroke-width="0.5" />
<line x1="870" y1="77.5" x2="938" y2="77.5" stroke="#fff" stroke-width="0.5" />
<polyline points="871.0,86.8 876.8,89.1 882.6,86.8 888.4,85.6 894.2,89.9 900.0,85.4 905.8,89.3 911.6,86.6 917.4,84.1 923.2,83.1 929.0,84.5 934.8,79.6" fill="none" stroke="#6aa1d8" stroke-width="0.9"/>
<circle cx="871.0" cy="86.8" r="1.2" fill="none" stroke="#6aa1d8" stroke-width="0.6"/>
<circle cx="876.8" cy="89.1" r="1.2" fill="none" stroke="#6aa1d8" stroke-width="0.6"/>
<circle cx="882.6" cy="86.8" r="1.2" fill="none" stroke="#6aa1d8" stroke-width="0.6"/>
<circle cx="888.4" cy="85.6" r="1.2" fill="none" stroke="#6aa1d8" stroke-width="0.6"/>
<circle cx="894.2" cy="89.9" r="1.2" fill="none" stroke="#6aa1d8" stroke-width="0.6"/>
<circle cx="900.0" cy="85.4" r="1.2" fill="none" stroke="#6aa1d8" stroke-width="0.6"/>
<circle cx="905.8" cy="89.3" r="1.2" fill="none" stroke="#6aa1d8" stroke-width="0.6"/>
<circle cx="911.6" cy="86.6" r="1.2" fill="none" stroke="#6aa1d8" stroke-width="0.6"/>
<circle cx="917.4" cy="84.1" r="1.2" fill="none" stroke="#6aa1d8" stroke-width="0.6"/>
<circle cx="923.2" cy="83.1" r="1.2" fill="none" stroke="#6aa1d8" stroke-width="0.6"/>
<circle cx="929.0" cy="84.5" r="1.2" fill="none" stroke="#6aa1d8" stroke-width="0.6"/>
<circle cx="934.8" cy="79.6" r="1.2" fill="none" stroke="#6aa1d8" stroke-width="0.6"/>
<line x1="870.0" y1="114" x2="875.0" y2="109.5" stroke="#888" stroke-width="0.8" />
<line x1="875.7" y1="114" x2="880.7" y2="109.5" stroke="#888" stroke-width="0.8" />
<line x1="881.4" y1="114" x2="886.4" y2="109.5" stroke="#888" stroke-width="0.8" />
<line x1="887.1" y1="114" x2="892.1" y2="109.5" stroke="#888" stroke-width="0.8" />
<line x1="892.8" y1="114" x2="897.8" y2="109.5" stroke="#888" stroke-width="0.8" />
<line x1="898.5" y1="114" x2="903.5" y2="109.5" stroke="#888" stroke-width="0.8" />
<line x1="904.2" y1="114" x2="909.2" y2="109.5" stroke="#888" stroke-width="0.8" />
<line x1="909.9" y1="114" x2="914.9" y2="109.5" stroke="#888" stroke-width="0.8" />
<line x1="915.6" y1="114" x2="920.6" y2="109.5" stroke="#888" stroke-width="0.8" />
<line x1="921.3" y1="114" x2="926.3" y2="109.5" stroke="#888" stroke-width="0.8" />
<line x1="927.0" y1="114" x2="932.0" y2="109.5" stroke="#888" stroke-width="0.8" />
<line x1="932.7" y1="114" x2="937.7" y2="109.5" stroke="#888" stroke-width="0.8" />
<rect x="863.5" y="106.1" width="2.5" height="0.8" fill="#888" opacity="0.7"/>
<rect x="863.5" y="101.95714285714286" width="2.5" height="0.8" fill="#888" opacity="0.7"/>
<rect x="863.5" y="97.8142857142857" width="2.5" height="0.8" fill="#888" opacity="0.7"/>
<rect x="863.5" y="93.67142857142856" width="2.5" height="0.8" fill="#888" opacity="0.7"/>
<rect x="863.5" y="89.52857142857142" width="2.5" height="0.8" fill="#888" opacity="0.7"/>
<rect x="863.5" y="85.38571428571427" width="2.5" height="0.8" fill="#888" opacity="0.7"/>
<rect x="863.5" y="81.24285714285713" width="2.5" height="0.8" fill="#888" opacity="0.7"/>
<rect x="863.5" y="77.1" width="2.5" height="0.8" fill="#888" opacity="0.7"/>
<rect x="983.8" y="65.7" width="27.5" height="24.5" fill="#fff" stroke="#777" stroke-width="1" />
<rect x="983.3" y="65.2" width="28.4" height="4.4" fill="#808080" />
<line x1="990.4" y1="69.6" x2="990.4" y2="72.2" stroke="#888" stroke-width="0.9" />
<line x1="990.4" y1="86.4" x2="990.4" y2="90.2" stroke="#888" stroke-width="0.9" />
<line x1="997.4" y1="69.6" x2="997.4" y2="72.2" stroke="#888" stroke-width="0.9" />
<line x1="997.4" y1="86.4" x2="997.4" y2="90.2" stroke="#888" stroke-width="0.9" />
<line x1="1004.4" y1="69.6" x2="1004.4" y2="72.2" stroke="#888" stroke-width="0.9" />
<line x1="1004.4" y1="86.4" x2="1004.4" y2="90.2" stroke="#888" stroke-width="0.9" />
<line x1="984" y1="74.3" x2="988.3" y2="74.3" stroke="#888" stroke-width="0.9" />
<line x1="1006.5" y1="74.3" x2="1011" y2="74.3" stroke="#888" stroke-width="0.9" />
<line x1="984" y1="79.5" x2="988.3" y2="79.5" stroke="#888" stroke-width="0.9" />
<line x1="1006.5" y1="79.5" x2="1011" y2="79.5" stroke="#888" stroke-width="0.9" />
<line x1="984" y1="84.2" x2="988.3" y2="84.2" stroke="#888" stroke-width="0.9" />
<line x1="1006.5" y1="84.2" x2="1011" y2="84.2" stroke="#888" stroke-width="0.9" />
<path d="M1001 74.3h3.4v9.9h-11.2M997.4 84.2v-4.7h7" fill="none" stroke="#e8893f" stroke-width="0.9" />
<path d="M990.1 84.5C989.3 78.5 992.5 74.8 999.5 74.8" fill="none" stroke="#3f7bc1" stroke-width="1.9" />
<path d="M995.8 71.2l5 3.6-5.2 3.7" fill="none" stroke="#3f7bc1" stroke-width="1.9" />
<path d="M986.2 80.6l3.9 4.7 3.4-4.5" fill="none" stroke="#3f7bc1" stroke-width="1.9" />
<rect x="1034.6" y="66.7" width="27.7" height="23.5" fill="#fff" stroke="#777" stroke-width="1" />
<rect x="1034.1" y="66.25" width="28.7" height="4.45" fill="#808080" />
<line x1="1034.6" y1="75.4" x2="1062.3" y2="75.4" stroke="#999" stroke-width="0.9" />
<line x1="1034.6" y1="80.3" x2="1062.3" y2="80.3" stroke="#999" stroke-width="0.9" />
<line x1="1034.6" y1="85.3" x2="1062.3" y2="85.3" stroke="#999" stroke-width="0.9" />
<line x1="1041.4" y1="70.7" x2="1041.4" y2="90.2" stroke="#999" stroke-width="0.9" />
<line x1="1048.4" y1="70.7" x2="1048.4" y2="90.2" stroke="#999" stroke-width="0.9" />
<line x1="1055.5" y1="70.7" x2="1055.5" y2="90.2" stroke="#999" stroke-width="0.9" />
<path d="M1055.5 77.7v-2.3h-14.1v9.9h5.5" fill="none" stroke="#e8893f" stroke-width="0.9" />
<rect x="1048.7" y="79.8" width="15.4" height="14.3" fill="#fff" stroke="#777" stroke-width="1" />
<rect x="1050.9" y="84.5" width="2.7" height="9.5" fill="#fff" stroke="#777" stroke-width="0.8" />
<rect x="1053.7" y="81.4" width="2.8" height="12.6" fill="#d9d9d9" stroke="#777" stroke-width="0.8" />
<rect x="1056.6" y="84.5" width="2.9" height="9.5" fill="#fff" stroke="#777" stroke-width="0.8" />
<rect x="1059.6" y="86.6" width="2.6" height="7.4" fill="#d9d9d9" stroke="#777" stroke-width="0.8" />
<rect x="1112" y="74" width="7" height="18" fill="#4a7fc0" />
<rect x="1120" y="66" width="7" height="26" fill="#f0c87c" />
<rect x="1128" y="71" width="7" height="21" fill="#808080" />
<path d="M1198.5 66.4H1225.6V86.6H1217.4L1214.9 90.6H1208.7V87.4L1206.1 90.6H1198.5Z" fill="#fff" stroke="#777" stroke-width="1.1" />
<line x1="1208.7" y1="87.4" x2="1217.4" y2="87.4" stroke="#777" stroke-width="1" />
<rect x="1203.2" y="74.2" width="4" height="9.5" fill="#fff" stroke="#777" stroke-width="1" />
<rect x="1207.2" y="69.3" width="4.2" height="14.4" fill="#d9d9d9" stroke="#777" stroke-width="1" />
<rect x="1213.4" y="73.5" width="4.2" height="10.2" fill="#fff" stroke="#777" stroke-width="1" />
<rect x="1217.6" y="76.4" width="4" height="7.3" fill="#d9d9d9" stroke="#777" stroke-width="1" />
<text x="976.3" y="109.5" font-size="12" fill="#444" textLength="43.4" lengthAdjust="spacingAndGlyphs" >Строка/</text>
<text x="975.5" y="125.5" font-size="12" fill="#444" textLength="44.5" lengthAdjust="spacingAndGlyphs" >столбец</text>
<text x="1025.3" y="109.5" font-size="12" fill="#444" textLength="46.4" lengthAdjust="spacingAndGlyphs" >Выбрать</text>
<text x="1028" y="125.5" font-size="12" fill="#444" textLength="40.8" lengthAdjust="spacingAndGlyphs" >данные</text>
<text x="1086.3" y="109.5" font-size="12" fill="#444" textLength="75.4" lengthAdjust="spacingAndGlyphs" >Изменить тип</text>
<text x="1092.2" y="125.5" font-size="12" fill="#444" textLength="63.6" lengthAdjust="spacingAndGlyphs" >диаграммы</text>
<text x="1176.3" y="109.5" font-size="12" fill="#444" textLength="71.7" lengthAdjust="spacingAndGlyphs" >Переместить</text>
<text x="1182" y="125.5" font-size="12" fill="#444" textLength="60.5" lengthAdjust="spacingAndGlyphs" >диаграмму</text>
<path d="M1901.5 144l4-4 4 4" fill="none" stroke="#666" stroke-width="1.3" />
<rect x="0" y="150" width="1920" height="46" fill="#e6e6e6" />
<rect x="5.5" y="160.5" width="101" height="25" fill="#fff" stroke="#c6c6c6" stroke-width="1" />
<text x="12" y="178.5" font-size="12.5" fill="#444" textLength="66.7" lengthAdjust="spacingAndGlyphs" >Диаграм...</text>
<path d="M92.5 170h7.5l-3.75 4.5z" fill="#666" />
<rect x="121.1" y="167.4" width="1.8" height="1.8" fill="#999" />
<rect x="121.1" y="172.2" width="1.8" height="1.8" fill="#999" />
<rect x="121.1" y="176.6" width="1.8" height="1.8" fill="#999" />
<rect x="137.5" y="160.5" width="109" height="25" fill="#fff" stroke="#c6c6c6" stroke-width="1" />
<path d="M150.8 168.8l10 9.2M160.8 168.8l-10 9.2" fill="none" stroke="#c4c4c4" stroke-width="1.5" />
<path d="M186.3 173.6l4.8 4.6 7.4-9.4" fill="none" stroke="#c8c8c8" stroke-width="2.2" />
<text x="221.2" y="176.5" font-size="14.5" fill="#555" font-weight="700" font-style="italic" font-family="Liberation Serif">f</text>
<text x="225.8" y="177.2" font-size="10.5" fill="#555" font-weight="700" font-style="italic" font-family="Liberation Serif">x</text>
<rect x="250.5" y="160.5" width="1664" height="25" fill="#fff" stroke="#c6c6c6" stroke-width="1" />
<path d="M1903 171l3.5 3.5 3.5-3.5" fill="none" stroke="#555" stroke-width="1.3" />
<rect x="0" y="196" width="1474" height="30" fill="#e6e6e6" />
<rect x="0" y="226" width="42" height="764" fill="#e6e6e6" />
<rect x="43" y="226" width="1408" height="764" fill="#fff" />
<line x1="43" y1="257.5" x2="1451" y2="257.5" stroke="#d9d9d9" stroke-width="1" />
<line x1="0" y1="257.5" x2="42.5" y2="257.5" stroke="#bdbdbd" stroke-width="1" />
<line x1="43" y1="289.5" x2="1451" y2="289.5" stroke="#d9d9d9" stroke-width="1" />
<line x1="0" y1="289.5" x2="42.5" y2="289.5" stroke="#bdbdbd" stroke-width="1" />
<line x1="43" y1="321.5" x2="1451" y2="321.5" stroke="#d9d9d9" stroke-width="1" />
<line x1="0" y1="321.5" x2="42.5" y2="321.5" stroke="#bdbdbd" stroke-width="1" />
<line x1="43" y1="353.5" x2="1451" y2="353.5" stroke="#d9d9d9" stroke-width="1" />
<line x1="0" y1="353.5" x2="42.5" y2="353.5" stroke="#bdbdbd" stroke-width="1" />
<line x1="43" y1="385.5" x2="1451" y2="385.5" stroke="#d9d9d9" stroke-width="1" />
<line x1="0" y1="385.5" x2="42.5" y2="385.5" stroke="#bdbdbd" stroke-width="1" />
<line x1="43" y1="417.5" x2="1451" y2="417.5" stroke="#d9d9d9" stroke-width="1" />
<line x1="0" y1="417.5" x2="42.5" y2="417.5" stroke="#bdbdbd" stroke-width="1" />
<line x1="43" y1="449.5" x2="1451" y2="449.5" stroke="#d9d9d9" stroke-width="1" />
<line x1="0" y1="449.5" x2="42.5" y2="449.5" stroke="#bdbdbd" stroke-width="1" />
<line x1="43" y1="481.5" x2="1451" y2="481.5" stroke="#d9d9d9" stroke-width="1" />
<line x1="0" y1="481.5" x2="42.5" y2="481.5" stroke="#bdbdbd" stroke-width="1" />
<line x1="43" y1="513.5" x2="1451" y2="513.5" stroke="#d9d9d9" stroke-width="1" />
<line x1="0" y1="513.5" x2="42.5" y2="513.5" stroke="#bdbdbd" stroke-width="1" />
<line x1="43" y1="545.5" x2="1451" y2="545.5" stroke="#d9d9d9" stroke-width="1" />
<line x1="0" y1="545.5" x2="42.5" y2="545.5" stroke="#bdbdbd" stroke-width="1" />
<line x1="43" y1="577.5" x2="1451" y2="577.5" stroke="#d9d9d9" stroke-width="1" />
<line x1="0" y1="577.5" x2="42.5" y2="577.5" stroke="#bdbdbd" stroke-width="1" />
<line x1="43" y1="609.5" x2="1451" y2="609.5" stroke="#d9d9d9" stroke-width="1" />
<line x1="0" y1="609.5" x2="42.5" y2="609.5" stroke="#bdbdbd" stroke-width="1" />
<line x1="43" y1="641.5" x2="1451" y2="641.5" stroke="#d9d9d9" stroke-width="1" />
<line x1="0" y1="641.5" x2="42.5" y2="641.5" stroke="#bdbdbd" stroke-width="1" />
<line x1="43" y1="673.5" x2="1451" y2="673.5" stroke="#d9d9d9" stroke-width="1" />
<line x1="0" y1="673.5" x2="42.5" y2="673.5" stroke="#bdbdbd" stroke-width="1" />
<line x1="43" y1="705.5" x2="1451" y2="705.5" stroke="#d9d9d9" stroke-width="1" />
<line x1="0" y1="705.5" x2="42.5" y2="705.5" stroke="#bdbdbd" stroke-width="1" />
<line x1="43" y1="737.5" x2="1451" y2="737.5" stroke="#d9d9d9" stroke-width="1" />
<line x1="0" y1="737.5" x2="42.5" y2="737.5" stroke="#bdbdbd" stroke-width="1" />
<line x1="43" y1="769.5" x2="1451" y2="769.5" stroke="#d9d9d9" stroke-width="1" />
<line x1="0" y1="769.5" x2="42.5" y2="769.5" stroke="#bdbdbd" stroke-width="1" />
<line x1="43" y1="801.5" x2="1451" y2="801.5" stroke="#d9d9d9" stroke-width="1" />
<line x1="0" y1="801.5" x2="42.5" y2="801.5" stroke="#bdbdbd" stroke-width="1" />
<line x1="43" y1="833.5" x2="1451" y2="833.5" stroke="#d9d9d9" stroke-width="1" />
<line x1="0" y1="833.5" x2="42.5" y2="833.5" stroke="#bdbdbd" stroke-width="1" />
<line x1="43" y1="865.5" x2="1451" y2="865.5" stroke="#d9d9d9" stroke-width="1" />
<line x1="0" y1="865.5" x2="42.5" y2="865.5" stroke="#bdbdbd" stroke-width="1" />
<line x1="43" y1="897.5" x2="1451" y2="897.5" stroke="#d9d9d9" stroke-width="1" />
<line x1="0" y1="897.5" x2="42.5" y2="897.5" stroke="#bdbdbd" stroke-width="1" />
<line x1="43" y1="929.5" x2="1451" y2="929.5" stroke="#d9d9d9" stroke-width="1" />
<line x1="0" y1="929.5" x2="42.5" y2="929.5" stroke="#bdbdbd" stroke-width="1" />
<line x1="43" y1="961.5" x2="1451" y2="961.5" stroke="#d9d9d9" stroke-width="1" />
<line x1="0" y1="961.5" x2="42.5" y2="961.5" stroke="#bdbdbd" stroke-width="1" />
<line x1="43" y1="993.5" x2="1451" y2="993.5" stroke="#d9d9d9" stroke-width="1" />
<line x1="0" y1="993.5" x2="42.5" y2="993.5" stroke="#bdbdbd" stroke-width="1" />
<line x1="144.5" y1="226" x2="144.5" y2="990" stroke="#d9d9d9" stroke-width="1" />
<line x1="144.5" y1="197" x2="144.5" y2="225.5" stroke="#bdbdbd" stroke-width="1" />
<line x1="325.5" y1="226" x2="325.5" y2="990" stroke="#d9d9d9" stroke-width="1" />
<line x1="325.5" y1="197" x2="325.5" y2="225.5" stroke="#bdbdbd" stroke-width="1" />
<line x1="427.5" y1="226" x2="427.5" y2="990" stroke="#d9d9d9" stroke-width="1" />
<line x1="427.5" y1="197" x2="427.5" y2="225.5" stroke="#bdbdbd" stroke-width="1" />
<line x1="529.5" y1="226" x2="529.5" y2="990" stroke="#d9d9d9" stroke-width="1" />
<line x1="529.5" y1="197" x2="529.5" y2="225.5" stroke="#bdbdbd" stroke-width="1" />
<line x1="631.5" y1="226" x2="631.5" y2="990" stroke="#d9d9d9" stroke-width="1" />
<line x1="631.5" y1="197" x2="631.5" y2="225.5" stroke="#bdbdbd" stroke-width="1" />
<line x1="733.5" y1="226" x2="733.5" y2="990" stroke="#d9d9d9" stroke-width="1" />
<line x1="733.5" y1="197" x2="733.5" y2="225.5" stroke="#bdbdbd" stroke-width="1" />
<line x1="835.5" y1="226" x2="835.5" y2="990" stroke="#d9d9d9" stroke-width="1" />
<line x1="835.5" y1="197" x2="835.5" y2="225.5" stroke="#bdbdbd" stroke-width="1" />
<line x1="937.5" y1="226" x2="937.5" y2="990" stroke="#d9d9d9" stroke-width="1" />
<line x1="937.5" y1="197" x2="937.5" y2="225.5" stroke="#bdbdbd" stroke-width="1" />
<line x1="1039.5" y1="226" x2="1039.5" y2="990" stroke="#d9d9d9" stroke-width="1" />
<line x1="1039.5" y1="197" x2="1039.5" y2="225.5" stroke="#bdbdbd" stroke-width="1" />
<line x1="1141.5" y1="226" x2="1141.5" y2="990" stroke="#d9d9d9" stroke-width="1" />
<line x1="1141.5" y1="197" x2="1141.5" y2="225.5" stroke="#bdbdbd" stroke-width="1" />
<line x1="1243.5" y1="226" x2="1243.5" y2="990" stroke="#d9d9d9" stroke-width="1" />
<line x1="1243.5" y1="197" x2="1243.5" y2="225.5" stroke="#bdbdbd" stroke-width="1" />
<line x1="1345.5" y1="226" x2="1345.5" y2="990" stroke="#d9d9d9" stroke-width="1" />
<line x1="1345.5" y1="197" x2="1345.5" y2="225.5" stroke="#bdbdbd" stroke-width="1" />
<line x1="1447.5" y1="226" x2="1447.5" y2="990" stroke="#d9d9d9" stroke-width="1" />
<line x1="1447.5" y1="197" x2="1447.5" y2="225.5" stroke="#bdbdbd" stroke-width="1" />
<line x1="0" y1="225.5" x2="1451" y2="225.5" stroke="#ababab" stroke-width="1" />
<line x1="42.5" y1="197" x2="42.5" y2="990" stroke="#ababab" stroke-width="1" />
<line x1="1451" y1="226" x2="1451" y2="990.5" stroke="#a6a6a6" stroke-width="1.2" />
<path d="M17.75 221.7h21.2v-21.3z" fill="#b4b4b4" />
<text x="93.5" y="220" font-size="22" fill="#000" text-anchor="middle" textLength="12.9" lengthAdjust="spacingAndGlyphs" >A</text>
<text x="235.0" y="220" font-size="22" fill="#000" text-anchor="middle" textLength="12.9" lengthAdjust="spacingAndGlyphs" >B</text>
<text x="376.5" y="220" font-size="22" fill="#000" text-anchor="middle" textLength="14.0" lengthAdjust="spacingAndGlyphs" >C</text>
<text x="478.5" y="220" font-size="22" fill="#000" text-anchor="middle" textLength="14.0" lengthAdjust="spacingAndGlyphs" >D</text>
<text x="580.5" y="220" font-size="22" fill="#000" text-anchor="middle" textLength="12.9" lengthAdjust="spacingAndGlyphs" >E</text>
<text x="682.5" y="220" font-size="22" fill="#000" text-anchor="middle" textLength="11.8" lengthAdjust="spacingAndGlyphs" >F</text>
<text x="784.5" y="220" font-size="22" fill="#000" text-anchor="middle" textLength="15.1" lengthAdjust="spacingAndGlyphs" >G</text>
<text x="886.5" y="220" font-size="22" fill="#000" text-anchor="middle" textLength="14.0" lengthAdjust="spacingAndGlyphs" >H</text>
<text x="988.5" y="220" font-size="22" fill="#000" text-anchor="middle" textLength="5.4" lengthAdjust="spacingAndGlyphs" >I</text>
<text x="1090.5" y="220" font-size="22" fill="#000" text-anchor="middle" textLength="9.7" lengthAdjust="spacingAndGlyphs" >J</text>
<text x="1192.5" y="220" font-size="22" fill="#000" text-anchor="middle" textLength="12.9" lengthAdjust="spacingAndGlyphs" >K</text>
<text x="1294.5" y="220" font-size="22" fill="#000" text-anchor="middle" textLength="10.8" lengthAdjust="spacingAndGlyphs" >L</text>
<text x="1396.5" y="220" font-size="22" fill="#000" text-anchor="middle" textLength="16.1" lengthAdjust="spacingAndGlyphs" >M</text>
<text x="21.2" y="250.0" font-size="22" fill="#000" text-anchor="middle" >1</text>
<text x="21.2" y="282.0" font-size="22" fill="#000" text-anchor="middle" >2</text>
<text x="21.2" y="314.0" font-size="22" fill="#000" text-anchor="middle" >3</text>
<text x="21.2" y="346.0" font-size="22" fill="#000" text-anchor="middle" >4</text>
<text x="21.2" y="378.0" font-size="22" fill="#000" text-anchor="middle" >5</text>
<text x="21.2" y="410.0" font-size="22" fill="#000" text-anchor="middle" >6</text>
<text x="21.2" y="442.0" font-size="22" fill="#000" text-anchor="middle" >7</text>
<text x="21.2" y="474.0" font-size="22" fill="#000" text-anchor="middle" >8</text>
<text x="21.2" y="506.0" font-size="22" fill="#000" text-anchor="middle" >9</text>
<text x="21.2" y="538.0" font-size="22" fill="#000" text-anchor="middle" textLength="22" lengthAdjust="spacingAndGlyphs" >10</text>
<text x="21.2" y="570.0" font-size="22" fill="#000" text-anchor="middle" textLength="22" lengthAdjust="spacingAndGlyphs" >11</text>
<text x="21.2" y="602.0" font-size="22" fill="#000" text-anchor="middle" textLength="22" lengthAdjust="spacingAndGlyphs" >12</text>
<text x="21.2" y="634.0" font-size="22" fill="#000" text-anchor="middle" textLength="22" lengthAdjust="spacingAndGlyphs" >13</text>
<text x="21.2" y="666.0" font-size="22" fill="#000" text-anchor="middle" textLength="22" lengthAdjust="spacingAndGlyphs" >14</text>
<text x="21.2" y="698.0" font-size="22" fill="#000" text-anchor="middle" textLength="22" lengthAdjust="spacingAndGlyphs" >15</text>
<text x="21.2" y="730.0" font-size="22" fill="#000" text-anchor="middle" textLength="22" lengthAdjust="spacingAndGlyphs" >16</text>
<text x="21.2" y="762.0" font-size="22" fill="#000" text-anchor="middle" textLength="22" lengthAdjust="spacingAndGlyphs" >17</text>
<text x="21.2" y="794.0" font-size="22" fill="#000" text-anchor="middle" textLength="22" lengthAdjust="spacingAndGlyphs" >18</text>
<text x="21.2" y="826.0" font-size="22" fill="#000" text-anchor="middle" textLength="22" lengthAdjust="spacingAndGlyphs" >19</text>
<text x="21.2" y="858.0" font-size="22" fill="#000" text-anchor="middle" textLength="22" lengthAdjust="spacingAndGlyphs" >20</text>
<text x="21.2" y="890.0" font-size="22" fill="#000" text-anchor="middle" textLength="22" lengthAdjust="spacingAndGlyphs" >21</text>
<text x="21.2" y="922.0" font-size="22" fill="#000" text-anchor="middle" textLength="22" lengthAdjust="spacingAndGlyphs" >22</text>
<text x="21.2" y="954.0" font-size="22" fill="#000" text-anchor="middle" textLength="22" lengthAdjust="spacingAndGlyphs" >23</text>
<text x="21.2" y="986.0" font-size="22" fill="#000" text-anchor="middle" textLength="22" lengthAdjust="spacingAndGlyphs" >24</text>
<line x1="42.5" y1="257.5" x2="325.5" y2="257.5" stroke="#000" stroke-width="1.3" />
<line x1="42.5" y1="289.5" x2="325.5" y2="289.5" stroke="#000" stroke-width="1.3" />
<line x1="42.5" y1="321.5" x2="325.5" y2="321.5" stroke="#000" stroke-width="1.3" />
<line x1="42.5" y1="353.5" x2="325.5" y2="353.5" stroke="#000" stroke-width="1.3" />
<line x1="42.5" y1="385.5" x2="325.5" y2="385.5" stroke="#000" stroke-width="1.3" />
<line x1="42.5" y1="417.5" x2="325.5" y2="417.5" stroke="#000" stroke-width="1.3" />
<line x1="42.5" y1="449.5" x2="325.5" y2="449.5" stroke="#000" stroke-width="1.3" />
<line x1="42.5" y1="481.5" x2="325.5" y2="481.5" stroke="#000" stroke-width="1.3" />
<line x1="42.5" y1="513.5" x2="325.5" y2="513.5" stroke="#000" stroke-width="1.3" />
<line x1="42.5" y1="545.5" x2="325.5" y2="545.5" stroke="#000" stroke-width="1.3" />
<line x1="42.5" y1="577.5" x2="325.5" y2="577.5" stroke="#000" stroke-width="1.3" />
<line x1="42.5" y1="609.5" x2="325.5" y2="609.5" stroke="#000" stroke-width="1.3" />
<line x1="42.5" y1="641.5" x2="325.5" y2="641.5" stroke="#000" stroke-width="1.3" />
<line x1="42.5" y1="225.5" x2="325.5" y2="225.5" stroke="#000" stroke-width="1.3" />
<line x1="144.5" y1="225.5" x2="144.5" y2="641.5" stroke="#000" stroke-width="1.3" />
<line x1="325.5" y1="225.5" x2="325.5" y2="641.5" stroke="#000" stroke-width="1.3" />
<text x="46.7" y="250" font-size="22" fill="#000" textLength="63.2" lengthAdjust="spacingAndGlyphs" >Месяц</text>
<text x="148.7" y="250" font-size="22" fill="#000" textLength="152.6" lengthAdjust="spacingAndGlyphs" >Спрос, млн. руб</text>
<text x="46.7" y="282" font-size="22" fill="#000" textLength="68.6" lengthAdjust="spacingAndGlyphs" >Январь</text>
<text x="321" y="282" font-size="22" fill="#000" text-anchor="end" textLength="22" lengthAdjust="spacingAndGlyphs" >95</text>
<text x="46.7" y="314" font-size="22" fill="#000" textLength="82.6" lengthAdjust="spacingAndGlyphs" >Февраль</text>
<text x="321" y="314" font-size="22" fill="#000" text-anchor="end" textLength="22" lengthAdjust="spacingAndGlyphs" >84</text>
<text x="46.7" y="346" font-size="22" fill="#000" textLength="51.1" lengthAdjust="spacingAndGlyphs" >Март</text>
<text x="321" y="346" font-size="22" fill="#000" text-anchor="end" textLength="22" lengthAdjust="spacingAndGlyphs" >95</text>
<text x="46.7" y="378" font-size="22" fill="#000" textLength="69.6" lengthAdjust="spacingAndGlyphs" >Апрель</text>
<text x="321" y="378" font-size="22" fill="#000" text-anchor="end" textLength="33" lengthAdjust="spacingAndGlyphs" >101</text>
<text x="46.7" y="410" font-size="22" fill="#000" textLength="41.4" lengthAdjust="spacingAndGlyphs" >Май</text>
<text x="321" y="410" font-size="22" fill="#000" text-anchor="end" textLength="22" lengthAdjust="spacingAndGlyphs" >80</text>
<text x="46.7" y="442" font-size="22" fill="#000" textLength="53.4" lengthAdjust="spacingAndGlyphs" >Июнь</text>
<text x="321" y="442" font-size="22" fill="#000" text-anchor="end" textLength="33" lengthAdjust="spacingAndGlyphs" >102</text>
<text x="46.7" y="474" font-size="22" fill="#000" textLength="53.4" lengthAdjust="spacingAndGlyphs" >Июль</text>
<text x="321" y="474" font-size="22" fill="#000" text-anchor="end" textLength="22" lengthAdjust="spacingAndGlyphs" >83</text>
<text x="46.7" y="506" font-size="22" fill="#000" textLength="59.4" lengthAdjust="spacingAndGlyphs" >Август</text>
<text x="321" y="506" font-size="22" fill="#000" text-anchor="end" textLength="22" lengthAdjust="spacingAndGlyphs" >96</text>
<text x="46.7" y="538" font-size="22" fill="#000" textLength="88.3" lengthAdjust="spacingAndGlyphs" >Сентябрь</text>
<text x="321" y="538" font-size="22" fill="#000" text-anchor="end" textLength="33" lengthAdjust="spacingAndGlyphs" >108</text>
<text x="46.7" y="570" font-size="22" fill="#000" textLength="79.4" lengthAdjust="spacingAndGlyphs" >Октябрь</text>
<text x="321" y="570" font-size="22" fill="#000" text-anchor="end" textLength="33" lengthAdjust="spacingAndGlyphs" >113</text>
<text x="46.7" y="602" font-size="22" fill="#000" textLength="70.7" lengthAdjust="spacingAndGlyphs" >Ноябрь</text>
<text x="321" y="602" font-size="22" fill="#000" text-anchor="end" textLength="33" lengthAdjust="spacingAndGlyphs" >106</text>
<text x="46.7" y="634" font-size="22" fill="#000" textLength="82.5" lengthAdjust="spacingAndGlyphs" >Декабрь</text>
<text x="321" y="634" font-size="22" fill="#000" text-anchor="end" textLength="33" lengthAdjust="spacingAndGlyphs" >130</text>
<rect x="608.5" y="392.5" width="767.0" height="460.0" fill="#fff" stroke="#8a8a8a" stroke-width="1.3" />
<line x1="607" y1="398" x2="607" y2="852" stroke="#dadada" stroke-width="1.2" />
<line x1="668" y1="756" x2="1352" y2="756" stroke="#d6d6d6" stroke-width="2" />
<text x="650" y="761" font-size="17.4" fill="#595959" text-anchor="end" >0</text>
<line x1="668" y1="715" x2="1352" y2="715" stroke="#d6d6d6" stroke-width="2" />
<text x="650" y="720" font-size="17.4" fill="#595959" text-anchor="end" >20</text>
<line x1="668" y1="675" x2="1352" y2="675" stroke="#d6d6d6" stroke-width="2" />
<text x="650" y="680" font-size="17.4" fill="#595959" text-anchor="end" >40</text>
<line x1="668" y1="634" x2="1352" y2="634" stroke="#d6d6d6" stroke-width="2" />
<text x="650" y="639" font-size="17.4" fill="#595959" text-anchor="end" >60</text>
<line x1="668" y1="593" x2="1352" y2="593" stroke="#d6d6d6" stroke-width="2" />
<text x="650" y="598" font-size="17.4" fill="#595959" text-anchor="end" >80</text>
<line x1="668" y1="552" x2="1352" y2="552" stroke="#d6d6d6" stroke-width="2" />
<text x="650" y="557" font-size="17.4" fill="#595959" text-anchor="end" >100</text>
<line x1="668" y1="511" x2="1352" y2="511" stroke="#d6d6d6" stroke-width="2" />
<text x="650" y="516" font-size="17.4" fill="#595959" text-anchor="end" >120</text>
<line x1="668" y1="471" x2="1352" y2="471" stroke="#d6d6d6" stroke-width="2" />
<text x="650" y="476" font-size="17.4" fill="#595959" text-anchor="end" >140</text>
<text x="892" y="436.5" font-size="26.5" fill="#595959" textLength="198.6" lengthAdjust="spacingAndGlyphs" >Спрос, млн. руб</text>
<polyline points="696.5,562.6 753.5,585.0 810.5,562.6 867.5,550.4 924.5,593.1 981.5,548.4 1038.5,587.0 1095.5,560.6 1152.5,536.1 1209.5,526.0 1266.5,540.2 1323.5,491.4" fill="none" stroke="#5b9bd5" stroke-width="5" stroke-linejoin="round" stroke-linecap="round"/>
<polyline points="696.5,563.4 707.1,564.6 717.8,565.7 728.4,566.8 739.0,567.8 749.6,568.7 760.3,569.6 770.9,570.3 781.5,571.0 792.1,571.6 802.8,572.2 813.4,572.6 824.0,573.0 834.7,573.3 845.3,573.5 855.9,573.6 866.5,573.7 877.2,573.7 887.8,573.6 898.4,573.4 909.0,573.2 919.7,572.9 930.3,572.5 940.9,572.0 951.6,571.4 962.2,570.8 972.8,570.1 983.4,569.3 994.1,568.4 1004.7,567.5 1015.3,566.4 1025.9,565.3 1036.6,564.1 1047.2,562.9 1057.8,561.5 1068.4,560.1 1079.1,558.6 1089.7,557.1 1100.3,555.4 1111.0,553.7 1121.6,551.9 1132.2,550.0 1142.8,548.1 1153.5,546.0 1164.1,543.9 1174.7,541.7 1185.3,539.4 1196.0,537.1 1206.6,534.7 1217.2,532.2 1227.9,529.6 1238.5,526.9 1249.1,524.2 1259.7,521.4 1270.4,518.5 1281.0,515.5 1291.6,512.5 1302.2,509.3 1312.9,506.1 1323.5,502.8" fill="none" stroke="#5b9bd5" stroke-width="2.9" stroke-dasharray="0 5.9" stroke-linecap="round"/>
<circle cx="696.5" cy="563.4" r="3.2" fill="#c5dcf2" stroke="#1d7be0" stroke-width="1.2"/>
<circle cx="1323.5" cy="502.8" r="3.2" fill="#c5dcf2" stroke="#1d7be0" stroke-width="1.2"/>
<text x="700.0" y="781.5" font-size="17.5" fill="#595959" text-anchor="end" transform="rotate(-45 700.0 781.5)">Январь</text>
<text x="757.0" y="781.5" font-size="17.5" fill="#595959" text-anchor="end" transform="rotate(-45 757.0 781.5)">Февраль</text>
<text x="814.0" y="781.5" font-size="17.5" fill="#595959" text-anchor="end" transform="rotate(-45 814.0 781.5)">Март</text>
<text x="871.0" y="781.5" font-size="17.5" fill="#595959" text-anchor="end" transform="rotate(-45 871.0 781.5)">Апрель</text>
<text x="928.0" y="781.5" font-size="17.5" fill="#595959" text-anchor="end" transform="rotate(-45 928.0 781.5)">Май</text>
<text x="985.0" y="781.5" font-size="17.5" fill="#595959" text-anchor="end" transform="rotate(-45 985.0 781.5)">Июнь</text>
<text x="1042.0" y="781.5" font-size="17.5" fill="#595959" text-anchor="end" transform="rotate(-45 1042.0 781.5)">Июль</text>
<text x="1099.0" y="781.5" font-size="17.5" fill="#595959" text-anchor="end" transform="rotate(-45 1099.0 781.5)">Август</text>
<text x="1156.0" y="781.5" font-size="17.5" fill="#595959" text-anchor="end" transform="rotate(-45 1156.0 781.5)">Сентябрь</text>
<text x="1213.0" y="781.5" font-size="17.5" fill="#595959" text-anchor="end" transform="rotate(-45 1213.0 781.5)">Октябрь</text>
<text x="1270.0" y="781.5" font-size="17.5" fill="#595959" text-anchor="end" transform="rotate(-45 1270.0 781.5)">Ноябрь</text>
<text x="1327.0" y="781.5" font-size="17.5" fill="#595959" text-anchor="end" transform="rotate(-45 1327.0 781.5)">Декабрь</text>
<circle cx="608.5" cy="392.5" r="4.7" fill="#fff" stroke="#8c8c8c" stroke-width="1.7"/>
<circle cx="991" cy="392.5" r="4.7" fill="#fff" stroke="#8c8c8c" stroke-width="1.7"/>
<circle cx="1375.5" cy="392.5" r="4.7" fill="#fff" stroke="#8c8c8c" stroke-width="1.7"/>
<circle cx="608.5" cy="622.5" r="4.7" fill="#fff" stroke="#8c8c8c" stroke-width="1.7"/>
<circle cx="1375.5" cy="622.5" r="4.7" fill="#fff" stroke="#8c8c8c" stroke-width="1.7"/>
<circle cx="608.5" cy="852.5" r="4.7" fill="#fff" stroke="#8c8c8c" stroke-width="1.7"/>
<circle cx="991" cy="852.5" r="4.7" fill="#fff" stroke="#8c8c8c" stroke-width="1.7"/>
<circle cx="1375.5" cy="852.5" r="4.7" fill="#fff" stroke="#8c8c8c" stroke-width="1.7"/>
<rect x="1389.5" y="391.5" width="27" height="27" fill="#fff" stroke="#adadad" stroke-width="1" />
<rect x="1389.5" y="429.5" width="27" height="27" fill="#fff" stroke="#adadad" stroke-width="1" />
<rect x="1389.5" y="467.5" width="27" height="27" fill="#fff" stroke="#adadad" stroke-width="1" />
<rect x="1400.5" y="398" width="5" height="14" fill="#5a9f7b" />
<rect x="1396" y="402.5" width="14" height="5" fill="#5a9f7b" />
<path d="M1394.5 450.5c2-4 5-6.5 8.5-6.2l2.2 2.4c-1 3.2-5 4.2-10.7 3.8z" fill="#3f7bc1" />
<circle cx="1402.3" cy="446.5" r="1.3" fill="#fff"/>
<path d="M1404 443.2l2.2-2.4 5.8-6.2-.6 5-5.2 4.2z" fill="#666" />
<path d="M1393.8 473h18.2l-6.5 7.5v8.6h-5.2v-8.6z" fill="#6f6f6f" />
<rect x="1401.6" y="480.8" width="2.4" height="7.4" fill="#fff" />
<rect x="1455.5" y="198.5" width="14" height="792" fill="#dcdcdc" />
<rect x="1455.5" y="198.5" width="14" height="14" fill="#fff" stroke="#a8a8a8" stroke-width="1" />
<path d="M1458.8 207.8h7.4l-3.7-3.6z" fill="#666" />
<rect x="1456" y="213.5" width="13" height="727.5" fill="#fff" stroke="#b4b4b4" stroke-width="1.2" />
<rect x="1455.5" y="976.5" width="14" height="14" fill="#fff" stroke="#b4b4b4" stroke-width="1" />
<path d="M1459 981.5h7l-3.5 3.5z" fill="#777" />
<rect x="1474" y="196" width="446" height="822" fill="#e6e6e6" />
<text x="1487.5" y="230" font-size="20.5" fill="#217346" textLength="207" lengthAdjust="spacingAndGlyphs" >Формат линии тренда</text>
<path d="M1880 216h9l-4.5 6z" fill="#666" />
<path d="M1897.5 215l9 9M1906.5 215l-9 9" fill="none" stroke="#5a5a5a" stroke-width="2" />
<text x="1492.5" y="252.5" font-size="12.5" fill="#217346" font-weight="700" textLength="148" lengthAdjust="spacingAndGlyphs" >Параметры линии тренда</text>
<path d="M1648 244h9l-4.5 6z" fill="#666" />
<path d="M1505.6 274.3C1511 274 1516.3 277.5 1515.8 283.5 1515.4 286.5 1513.8 289 1512.6 290.3L1512.3 280.8z" fill="#707070" />
<path d="M1493.1 281.2l10-9.8 9.2 9.4-9.8 9.9z" fill="#fff" stroke="#707070" stroke-width="1" />
<circle cx="1501.9" cy="271.2" r="2.1" fill="none" stroke="#707070" stroke-width="1"/>
<line x1="1503.4" y1="271.5" x2="1503.4" y2="277.5" stroke="#707070" stroke-width="1" />
<circle cx="1503.4" cy="277.6" r="1.3" fill="#707070"/>
<path d="M1544.4 269.3l9.7 7.4-4.1 10.9h-11.3l-4-10.9z" fill="#fff" stroke="#707070" stroke-width="1" />
<line x1="1538.5" y1="287.6" x2="1550.3" y2="287.6" stroke="#666" stroke-width="1.8" />
<path d="M1538 288.5h13l1.2 4h-15.4z" fill="#f4f4f4" />
<rect x="1574.1" y="276.3" width="5.8" height="14.6" fill="#217346" />
<rect x="1581.1" y="270.1" width="5.9" height="20.8" fill="#217346" />
<rect x="1588.1" y="273.1" width="5.8" height="17.8" fill="#217346" />
<line x1="1487" y1="310.5" x2="1577.8" y2="310.5" stroke="#c6c6c6" stroke-width="1" />
<line x1="1590.3" y1="310.5" x2="1905" y2="310.5" stroke="#c6c6c6" stroke-width="1" />
<path d="M1577.8 310.5l6.3-7.9 6.2 7.9" fill="#e6e6e6" stroke="#c6c6c6" stroke-width="1" />
<path d="M1496 327.5h6v-6z" fill="#444" />
<text x="1509.5" y="330" font-size="12.5" fill="#217346" font-weight="700" textLength="148.5" lengthAdjust="spacingAndGlyphs" >Параметры линии тренда</text>
<circle cx="1556.75" cy="360" r="5.6" fill="#fff" stroke="#a8a8a8" stroke-width="1"/>
<text x="1568" y="364.5" font-size="12.5" fill="#3a3a3a" textLength="104.5" lengthAdjust="spacingAndGlyphs" >Экспоненциальная</text>
<circle cx="1556.75" cy="395" r="5.6" fill="#fff" stroke="#a8a8a8" stroke-width="1"/>
<text x="1568" y="399.5" font-size="12.5" fill="#3a3a3a" textLength="54" lengthAdjust="spacingAndGlyphs" >Линейная</text>
<circle cx="1556.75" cy="430" r="5.6" fill="#fff" stroke="#a8a8a8" stroke-width="1"/>
<text x="1568" y="434.5" font-size="12.5" fill="#3a3a3a" textLength="101.5" lengthAdjust="spacingAndGlyphs" >Логарифмическая</text>
<circle cx="1556.75" cy="465" r="5.6" fill="#fff" stroke="#a8a8a8" stroke-width="1"/>
<circle cx="1556.75" cy="465" r="2.8" fill="#555"/>
<text x="1568" y="469.5" font-size="12.5" fill="#3a3a3a" textLength="97.5" lengthAdjust="spacingAndGlyphs" >Полиномиальная</text>
<circle cx="1556.75" cy="500" r="5.6" fill="#fff" stroke="#a8a8a8" stroke-width="1"/>
<text x="1568" y="504.5" font-size="12.5" fill="#3a3a3a" textLength="57.5" lengthAdjust="spacingAndGlyphs" >Степенная</text>
<circle cx="1556.75" cy="535" r="5.6" fill="#fff" stroke="#a8a8a8" stroke-width="1"/>
<text x="1568" y="539.5" font-size="12.5" fill="#3a3a3a" textLength="123.5" lengthAdjust="spacingAndGlyphs" >Линейная фильтрация</text>
<g transform="translate(1505 340) scale(0.1946)">
<path d="M38 40V160H170" fill="none" stroke="#6a6a6a" stroke-width="6" />
<path d="M45 135 C90 138 140 120 160 45" fill="none" stroke="#e8893f" stroke-width="6.5" />
<rect x="49.4" y="105.4" width="5.2" height="5.2" fill="#444" />
<rect x="62.4" y="137.4" width="5.2" height="5.2" fill="#444" />
<rect x="72.4" y="117.4" width="5.2" height="5.2" fill="#444" />
<rect x="82.4" y="112.4" width="5.2" height="5.2" fill="#444" />
<rect x="97.4" y="142.4" width="5.2" height="5.2" fill="#444" />
<rect x="102.4" y="102.4" width="5.2" height="5.2" fill="#444" />
<rect x="122.4" y="122.4" width="5.2" height="5.2" fill="#444" />
<rect x="132.4" y="117.4" width="5.2" height="5.2" fill="#444" />
<rect x="137.4" y="72.4" width="5.2" height="5.2" fill="#444" />
<rect x="152.4" y="62.4" width="5.2" height="5.2" fill="#444" />
</g>
<g transform="translate(1505 375) scale(0.1946)">
<path d="M38 40V160H170" fill="none" stroke="#6a6a6a" stroke-width="6" />
<path d="M50 143 L160 48" fill="none" stroke="#e8893f" stroke-width="6.5" />
<rect x="62.4" y="142.4" width="5.2" height="5.2" fill="#444" />
<rect x="59.4" y="107.4" width="5.2" height="5.2" fill="#444" />
<rect x="77.4" y="107.4" width="5.2" height="5.2" fill="#444" />
<rect x="82.4" y="132.4" width="5.2" height="5.2" fill="#444" />
<rect x="87.4" y="85.4" width="5.2" height="5.2" fill="#444" />
<rect x="107.4" y="65.4" width="5.2" height="5.2" fill="#444" />
<rect x="107.4" y="107.4" width="5.2" height="5.2" fill="#444" />
<rect x="122.4" y="87.4" width="5.2" height="5.2" fill="#444" />
<rect x="132.4" y="87.4" width="5.2" height="5.2" fill="#444" />
<rect x="147.4" y="57.4" width="5.2" height="5.2" fill="#444" />
<rect x="157.4" y="77.4" width="5.2" height="5.2" fill="#444" />
</g>
<g transform="translate(1505 410) scale(0.1946)">
<path d="M38 40V160H170" fill="none" stroke="#6a6a6a" stroke-width="6" />
<path d="M50 150 C60 90 110 70 170 60" fill="none" stroke="#e8893f" stroke-width="6.5" />
<rect x="52.4" y="97.4" width="5.2" height="5.2" fill="#444" />
<rect x="65.4" y="117.4" width="5.2" height="5.2" fill="#444" />
<rect x="77.4" y="82.4" width="5.2" height="5.2" fill="#444" />
<rect x="92.4" y="62.4" width="5.2" height="5.2" fill="#444" />
<rect x="107.4" y="52.4" width="5.2" height="5.2" fill="#444" />
<rect x="102.4" y="92.4" width="5.2" height="5.2" fill="#444" />
<rect x="122.4" y="79.4" width="5.2" height="5.2" fill="#444" />
<rect x="132.4" y="79.4" width="5.2" height="5.2" fill="#444" />
<rect x="142.4" y="57.4" width="5.2" height="5.2" fill="#444" />
<rect x="152.4" y="87.4" width="5.2" height="5.2" fill="#444" />
</g>
<g transform="translate(1505 445) scale(0.1946)">
<path d="M38 40V160H170" fill="none" stroke="#6a6a6a" stroke-width="6" />
<path d="M55 125 C60 90 90 95 105 120 C120 160 150 150 160 110 L165 60" fill="none" stroke="#e8893f" stroke-width="6.5" />
<rect x="52.4" y="107.4" width="5.2" height="5.2" fill="#444" />
<rect x="62.4" y="132.4" width="5.2" height="5.2" fill="#444" />
<rect x="82.4" y="92.4" width="5.2" height="5.2" fill="#444" />
<rect x="102.4" y="152.4" width="5.2" height="5.2" fill="#444" />
<rect x="107.4" y="117.4" width="5.2" height="5.2" fill="#444" />
<rect x="137.4" y="132.4" width="5.2" height="5.2" fill="#444" />
<rect x="152.4" y="92.4" width="5.2" height="5.2" fill="#444" />
<rect x="155.4" y="52.4" width="5.2" height="5.2" fill="#444" />
<rect x="167.4" y="117.4" width="5.2" height="5.2" fill="#444" />
</g>
<g transform="translate(1505 480) scale(0.1946)">
<path d="M38 40V160H170" fill="none" stroke="#6a6a6a" stroke-width="6" />
<path d="M45 135 C90 138 140 120 160 45" fill="none" stroke="#e8893f" stroke-width="6.5" />
<rect x="49.4" y="105.4" width="5.2" height="5.2" fill="#444" />
<rect x="62.4" y="137.4" width="5.2" height="5.2" fill="#444" />
<rect x="72.4" y="117.4" width="5.2" height="5.2" fill="#444" />
<rect x="82.4" y="112.4" width="5.2" height="5.2" fill="#444" />
<rect x="97.4" y="142.4" width="5.2" height="5.2" fill="#444" />
<rect x="102.4" y="102.4" width="5.2" height="5.2" fill="#444" />
<rect x="122.4" y="122.4" width="5.2" height="5.2" fill="#444" />
<rect x="132.4" y="117.4" width="5.2" height="5.2" fill="#444" />
<rect x="137.4" y="72.4" width="5.2" height="5.2" fill="#444" />
<rect x="152.4" y="62.4" width="5.2" height="5.2" fill="#444" />
</g>
<g transform="translate(1505 515) scale(0.1946)">
<path d="M38 40V160H170" fill="none" stroke="#6a6a6a" stroke-width="6" />
<path d="M50 120 L80 155 L115 100 C125 75 140 70 160 55" fill="none" stroke="#e8893f" stroke-width="6.5" />
<rect x="52.4" y="107.4" width="5.2" height="5.2" fill="#444" />
<rect x="52.4" y="142.4" width="5.2" height="5.2" fill="#444" />
<rect x="65.4" y="122.4" width="5.2" height="5.2" fill="#444" />
<rect x="92.4" y="152.4" width="5.2" height="5.2" fill="#444" />
<rect x="92.4" y="92.4" width="5.2" height="5.2" fill="#444" />
<rect x="107.4" y="117.4" width="5.2" height="5.2" fill="#444" />
<rect x="117.4" y="92.4" width="5.2" height="5.2" fill="#444" />
<rect x="122.4" y="57.4" width="5.2" height="5.2" fill="#444" />
<rect x="142.4" y="52.4" width="5.2" height="5.2" fill="#444" />
<rect x="155.4" y="62.4" width="5.2" height="5.2" fill="#444" />
</g>
<rect x="1568" y="366.5" width="6.7000000000000455" height="1" fill="#3a3a3a" />
<rect x="1568" y="401.5" width="7" height="1" fill="#3a3a3a" />
<rect x="1584.5" y="436.5" width="6.0" height="1" fill="#3a3a3a" />
<rect x="1568" y="471.5" width="8" height="1" fill="#3a3a3a" />
<rect x="1568" y="506.5" width="7.5" height="1" fill="#3a3a3a" />
<rect x="1625" y="541.5" width="9.5" height="1" fill="#3a3a3a" />
<rect x="1743.7" y="471.5" width="6.2999999999999545" height="1" fill="#3a3a3a" />
<rect x="1705" y="541.5" width="7" height="1" fill="#a6a6a6" />
<rect x="1537" y="601.5" width="8" height="1" fill="#3a3a3a" />
<rect x="1563" y="623.5" width="7" height="1" fill="#3a3a3a" />
<rect x="1533" y="673.5" width="6.5" height="1" fill="#3a3a3a" />
<rect x="1519" y="699.5" width="8" height="1" fill="#3a3a3a" />
<rect x="1527" y="723.5" width="8" height="1" fill="#3a3a3a" />
<rect x="1593" y="749.5" width="7" height="1" fill="#3a3a3a" />
<rect x="1755.5" y="774.5" width="6.0" height="1" fill="#3a3a3a" />
<text x="1705" y="469.5" font-size="12.5" fill="#3a3a3a" textLength="44" lengthAdjust="spacingAndGlyphs" >Степень</text>
<rect x="1761.5" y="455.5" width="42" height="20" fill="#fff" stroke="#217346" stroke-width="1.2" />
<text x="1767.5" y="469.5" font-size="12.5" fill="#333" >4</text>
<path d="M1793 462h5l-2.5-3z" fill="#666" />
<path d="M1793 469h5l-2.5 3z" fill="#666" />
<text x="1705" y="539.5" font-size="12.5" fill="#a6a6a6" textLength="33" lengthAdjust="spacingAndGlyphs" >Точки</text>
<rect x="1761.5" y="526" width="42" height="19" fill="#ebebeb" stroke="#e0e0e0" stroke-width="1" />
<text x="1767.5" y="539.5" font-size="12.5" fill="#a6a6a6" >2</text>
<path d="M1793 532h5l-2.5-3z" fill="#bbb" />
<path d="M1793 539h5l-2.5 3z" fill="#bbb" />
<text x="1509.5" y="571" font-size="12.5" fill="#3a3a3a" textLength="291.5" lengthAdjust="spacingAndGlyphs" >Название аппроксимирующей (сглаженной) кривой</text>
<circle cx="1525.75" cy="595.5" r="5.6" fill="#fff" stroke="#a8a8a8" stroke-width="1"/>
<circle cx="1525.75" cy="595.5" r="2.8" fill="#555"/>
<text x="1537" y="600" font-size="12.5" fill="#3a3a3a" textLength="84.5" lengthAdjust="spacingAndGlyphs" >Автоматически</text>
<text x="1685" y="600" font-size="12.5" fill="#3a3a3a" textLength="198.5" lengthAdjust="spacingAndGlyphs" >Полиномиальная (Спрос, млн. руб)</text>
<circle cx="1525.75" cy="617.5" r="5.6" fill="#fff" stroke="#a8a8a8" stroke-width="1"/>
<text x="1537" y="622" font-size="12.5" fill="#3a3a3a" textLength="39" lengthAdjust="spacingAndGlyphs" >Другое</text>
<rect x="1685" y="609" width="85" height="18" fill="#ebebeb" />
<text x="1509.5" y="647.5" font-size="12.5" fill="#3a3a3a" textLength="46.5" lengthAdjust="spacingAndGlyphs" >Прогноз</text>
<text x="1519" y="671.5" font-size="12.5" fill="#3a3a3a" textLength="55" lengthAdjust="spacingAndGlyphs" >Вперед на</text>
<rect x="1766.5" y="656.5" width="55" height="19" fill="#fff" stroke="#aaa" stroke-width="1" />
<text x="1773" y="670.5" font-size="12.5" fill="#333" >0,0</text>
<text x="1831.25" y="671.5" font-size="12.5" fill="#3a3a3a" textLength="52.5" lengthAdjust="spacingAndGlyphs" >периодов</text>
<text x="1519" y="697.5" font-size="12.5" fill="#3a3a3a" textLength="47.5" lengthAdjust="spacingAndGlyphs" >Назад на</text>
<rect x="1766.5" y="682.5" width="55" height="19" fill="#fff" stroke="#aaa" stroke-width="1" />
<text x="1773" y="696.5" font-size="12.5" fill="#333" >0,0</text>
<text x="1831.25" y="697.5" font-size="12.5" fill="#3a3a3a" textLength="52.5" lengthAdjust="spacingAndGlyphs" >периодов</text>
<rect x="1509.5" y="711" width="12" height="12" fill="#fff" stroke="#999" stroke-width="1" />
<text x="1527" y="722" font-size="12.5" fill="#3a3a3a" textLength="132" lengthAdjust="spacingAndGlyphs" >Настроить пересечение</text>
<rect x="1831" y="709" width="54" height="18.5" fill="#ebebeb" />
<text x="1837" y="722" font-size="12.5" fill="#a6a6a6" >0,0</text>
<rect x="1509.5" y="736.5" width="12" height="12" fill="#fff" stroke="#999" stroke-width="1" />
<text x="1527" y="748" font-size="12.5" fill="#3a3a3a" textLength="204" lengthAdjust="spacingAndGlyphs" >показывать уравнение на диаграмме</text>
<rect x="1509.5" y="769.5" width="12" height="12" fill="#fff" stroke="#999" stroke-width="1" />
<text x="1527" y="773" font-size="12.5" fill="#3a3a3a" textLength="278.5" lengthAdjust="spacingAndGlyphs" >поместить на диаграмму величину достоверности</text>
<text x="1527" y="789" font-size="12.5" fill="#3a3a3a" textLength="120.5" lengthAdjust="spacingAndGlyphs" >аппроксимации (R^2)</text>
<rect x="0" y="990" width="1474" height="28" fill="#e6e6e6" />
<line x1="0" y1="990.5" x2="1451.5" y2="990.5" stroke="#a6a6a6" stroke-width="1.2" />
<path d="M100.5 990.5v23h60v-23" fill="#fff" stroke="#c6c6c6" stroke-width="1" />
<rect x="100" y="990" width="61" height="2" fill="#fff" />
<rect x="100.5" y="1012.5" width="61" height="2" fill="#217346" />
<text x="112" y="1009" font-size="13" fill="#217346" font-weight="700" textLength="36.5" lengthAdjust="spacingAndGlyphs" >Трэнд</text>
<path d="M31.5 1000.5v7l-4.5-3.5z" fill="#bbb" />
<path d="M57 1000.5v7l4.5-3.5z" fill="#bbb" />
<circle cx="203" cy="1004" r="7.5" fill="none" stroke="#555" stroke-width="1.2"/>
<path d="M199 1004h8M203 1000v8" fill="none" stroke="#555" stroke-width="1.3" />
<rect x="884" y="999" width="1.6" height="1.6" fill="#999" />
<rect x="884" y="1003" width="1.6" height="1.6" fill="#999" />
<rect x="884" y="1007" width="1.6" height="1.6" fill="#999" />
<rect x="901.5" y="997.5" width="550" height="14" fill="#dedede" stroke="#c6c6c6" stroke-width="1" />
<rect x="901.5" y="997.5" width="14.5" height="14" fill="#fff" stroke="#c6c6c6" stroke-width="1" />
<path d="M911 1001v7l-3.5-3.5z" fill="#555" />
<rect x="916" y="998" width="450" height="13" fill="#fff" stroke="#c6c6c6" stroke-width="1" />
<rect x="1437.5" y="997.5" width="14" height="14" fill="#fff" stroke="#c6c6c6" stroke-width="1" />
<path d="M1442 1001v7l3.5-3.5z" fill="#555" />
<line x1="1473.5" y1="198" x2="1473.5" y2="1017" stroke="#c6c6c6" stroke-width="1" />
<rect x="0" y="1018" width="1920" height="22" fill="#f1f1f1" />
<line x1="0" y1="1017.5" x2="1920" y2="1017.5" stroke="#d6d6d6" stroke-width="1" />
<text x="7" y="1033" font-size="12" fill="#444" textLength="36.5" lengthAdjust="spacingAndGlyphs" >Готово</text>
<text x="60" y="1033" font-size="12" fill="#444" textLength="57.5" lengthAdjust="spacingAndGlyphs" >Вычислить</text>
<text x="1319" y="1033" font-size="12" fill="#444" textLength="114" lengthAdjust="spacingAndGlyphs" >Среднее: 99,41666667</text>
<text x="1449" y="1033" font-size="12" fill="#444" textLength="80.5" lengthAdjust="spacingAndGlyphs" >Количество: 26</text>
<text x="1545" y="1033" font-size="12" fill="#444" textLength="64.5" lengthAdjust="spacingAndGlyphs" >Сумма: 1193</text>
<rect x="1628.5" y="1019" width="37" height="21" fill="#c8c8c8" />
<rect x="1640.5" y="1022.5" width="12.3" height="12.3" fill="none" stroke="#666" stroke-width="1.2" />
<line x1="1644.6" y1="1022.5" x2="1644.6" y2="1034.8" stroke="#666" stroke-width="1.1" />
<line x1="1640.5" y1="1026.6" x2="1652.8" y2="1026.6" stroke="#666" stroke-width="1.1" />
<line x1="1648.7" y1="1022.5" x2="1648.7" y2="1034.8" stroke="#666" stroke-width="1.1" />
<line x1="1640.5" y1="1030.7" x2="1652.8" y2="1030.7" stroke="#666" stroke-width="1.1" />
<rect x="1678.5" y="1022.5" width="13.2" height="12.5" fill="none" stroke="#666" stroke-width="1.1" />
<rect x="1681" y="1024.8" width="8.2" height="8" fill="none" stroke="#666" stroke-width="0.9" />
<line x1="1682.5" y1="1027" x2="1687.7" y2="1027" stroke="#666" stroke-width="0.8" />
<line x1="1682.5" y1="1029" x2="1687.7" y2="1029" stroke="#666" stroke-width="0.8" />
<line x1="1682.5" y1="1031" x2="1687.7" y2="1031" stroke="#666" stroke-width="0.8" />
<rect x="1716.5" y="1022.5" width="13.2" height="12.5" fill="none" stroke="#666" stroke-width="1.1" />
<path d="M1720.5 1022.5v6h8.5M1724.5 1022.5v6" fill="none" stroke="#666" stroke-width="1" />
<rect x="1746.5" y="1028" width="6" height="1.6" fill="#555" />
<line x1="1757" y1="1028.5" x2="1857" y2="1028.5" stroke="#aaa" stroke-width="1" />
<line x1="1807.5" y1="1026" x2="1807.5" y2="1031" stroke="#aaa" stroke-width="1" />
<rect x="1815.5" y="1023.5" width="3.5" height="10" fill="#666" />
<rect x="1861" y="1028" width="8" height="1.6" fill="#555" />
<rect x="1864.2" y="1024.8" width="1.6" height="8" fill="#555" />
<text x="1884" y="1033" font-size="12" fill="#444" textLength="27" lengthAdjust="spacingAndGlyphs" >160%</text>
<rect x="0" y="1040" width="1920" height="40" fill="#1d2b38" />
<path d="M16 1053.5l6.8-1v6.6h-6.8zM23.8 1052.3l8.2-1.2v8h-8.2zM16 1060.1h6.8v6.6l-6.8-1zM23.8 1060.1h8.2v8l-8.2-1.2z" fill="#fff" />
<circle cx="73.5" cy="1057" r="5.2" fill="none" stroke="#fff" stroke-width="1.4"/>
<path d="M69.5 1061l-5 5.5" fill="none" stroke="#fff" stroke-width="1.6" />
<rect x="113" y="1053" width="9" height="10" fill="none" stroke="#fff" stroke-width="1.2" />
<rect x="111" y="1051" width="13" height="1.4" fill="#fff" />
<rect x="111" y="1064" width="13" height="1.4" fill="#fff" />
<rect x="125" y="1052" width="2" height="2" fill="#fff" />
<rect x="125" y="1056" width="2" height="6" fill="#fff" />
<path d="M160 1052h8l2 2h12v14h-22z" fill="#f2c94c" />
<rect x="160" y="1056" width="22" height="12" fill="#f7d774" />
<rect x="166" y="1062" width="10" height="6" fill="#3a8fd6" />
<rect x="209" y="1049" width="16" height="21" fill="#2b579a" />
<rect x="219" y="1051.5" width="12" height="16" fill="#fff" />
<rect x="221" y="1054" width="8" height="1.2" fill="#2b579a" />
<rect x="221" y="1057" width="8" height="1.2" fill="#2b579a" />
<rect x="221" y="1060" width="8" height="1.2" fill="#2b579a" />
<rect x="221" y="1063" width="8" height="1.2" fill="#2b579a" />
<text x="211.5" y="1064" font-size="10" fill="#fff" font-weight="700" >W</text>
<circle cx="269.5" cy="1059.5" r="11.2" fill="#fff"/>
<path d="M264.5 1052.5l5 7.5v8M274.5 1052.5l-5 7.5" fill="none" stroke="#e52620" stroke-width="2.4" />
<rect x="294" y="1040" width="45" height="40" fill="#46525d" />
<rect x="306" y="1049" width="16" height="21" fill="#1e7145" />
<rect x="316" y="1051.5" width="12" height="16" fill="#fff" />
<rect x="318" y="1054" width="8" height="1" fill="#1e7145" />
<rect x="318" y="1057" width="8" height="1" fill="#1e7145" />
<rect x="318" y="1060" width="8" height="1" fill="#1e7145" />
<rect x="318" y="1063" width="8" height="1" fill="#1e7145" />
<text x="308" y="1064" font-size="10" fill="#fff" font-weight="700" >X</text>
<rect x="294" y="1078" width="45" height="2" fill="#8fb8e8" />
<rect x="151" y="1078" width="40" height="2" fill="#76a5dc" />
<rect x="199" y="1078" width="41" height="2" fill="#76a5dc" />
<rect x="248" y="1078" width="41" height="2" fill="#76a5dc" />
<rect x="493" y="1078" width="41" height="2" fill="#76a5dc" />
<rect x="338.5" y="1040" width="1" height="40" fill="#2d3c48" />
<rect x="357.2" y="1050" width="19.8" height="20.2" fill="#f04a23" rx="1.5"/>
<path d="M367.1 1047.8l12 12-12 12-12-12z" fill="#e9c08e" />
<path d="M359.8 1059.8c4-5.5 10.6-5.5 14.6 0c-4 5.5-10.6 5.5-14.6 0z" fill="#fff" />
<circle cx="366.6" cy="1059.8" r="3.6" fill="#1f6fd6"/>
<circle cx="366.6" cy="1059.8" r="1.7" fill="#111"/>
<ellipse cx="415" cy="1058.5" rx="11" ry="5.2" fill="#9aa0a6" transform="rotate(-22 415 1058.5)"/>
<ellipse cx="416" cy="1056.5" rx="11.2" ry="5" fill="#f2f2f2" stroke="#d33" stroke-width="0.9" transform="rotate(-22 416 1056.5)"/>
<path d="M412 1053l5 7M420 1052l-3 8" fill="none" stroke="#777" stroke-width="0.8" />
<ellipse cx="419.5" cy="1066.5" rx="1.8" ry="3.3" fill="none" stroke="#2a8ad8" stroke-width="1.3" transform="rotate(20 419.5 1066.5)"/>
<ellipse cx="425" cy="1064.5" rx="3.3" ry="1.8" fill="none" stroke="#2a8ad8" stroke-width="1.3" transform="rotate(20 425 1064.5)"/>
<defs><linearGradient id="edg" x1="0" y1="1" x2="1" y2="0"><stop offset="0" stop-color="#0c59a4"/><stop offset="0.5" stop-color="#1b9de2"/><stop offset="1" stop-color="#5fd46a"/></linearGradient></defs>
<circle cx="465" cy="1059.8" r="12" fill="url(#edg)"/>
<path d="M455 1066c-2-6 2-12 8-12.5 5-.5 9 2.5 10 6.5h-7c-3-1-6 1-6 4 0 4 4 7.5 9 7.5-6 2.5-12 .5-14-5.5z" fill="#1464b4" />
<circle cx="466" cy="1061" r="3.2" fill="#1d2b38"/>
<path d="M503 1050.5l13-1.8v22l-13-1.8z" fill="#d24625" />
<rect x="516" y="1052" width="9" height="15.5" fill="#fff" />
<circle cx="520.5" cy="1056.5" r="2.6" fill="#d24625"/>
<rect x="517.5" y="1061" width="6" height="0.9" fill="#d24625" />
<rect x="517.5" y="1063.5" width="6" height="0.9" fill="#d24625" />
<text x="505.5" y="1064" font-size="10.5" fill="#fff" font-weight="700" >P</text>
<path d="M1699.5 1062.7l5.9-5.9 5.9 5.9" fill="none" stroke="#fff" stroke-width="1.3" />
<rect x="1723.5" y="1053.5" width="14" height="8.5" fill="none" stroke="#fff" stroke-width="1.1" />
<path d="M1730 1062v4M1726 1066.5h8" fill="none" stroke="#fff" stroke-width="1.1" />
<rect x="1721" y="1050.5" width="4.5" height="5" fill="#1d2b38" stroke="#fff" stroke-width="1" />
<path d="M1745.5 1055.5h3l4-3.5v14l-4-3.5h-3z" fill="none" stroke="#fff" stroke-width="1.1" />
<path d="M1755 1056c1 1.5 1 4.5 0 6M1757.5 1054c2 2.5 2 7.5 0 10M1760 1052c3 3.5 3 11.5 0 15" fill="none" stroke="#fff" stroke-width="1.1" />
<text x="1771.5" y="1063.5" font-size="12" fill="#fff" textLength="21.5" lengthAdjust="spacingAndGlyphs" >РУС</text>
<text x="1834" y="1056" font-size="12" fill="#fff" text-anchor="middle" textLength="27" lengthAdjust="spacingAndGlyphs" >11:29</text>
<text x="1834" y="1073" font-size="12" fill="#fff" text-anchor="middle" textLength="54" lengthAdjust="spacingAndGlyphs" >06.03.2023</text>
<path d="M1879.2 1052h15.8v13h-5.5l-2.8 3v-3h-7.5z" fill="#fff" />
<rect x="1881.5" y="1055.2" width="11" height="1.1" fill="#1d2b38" />
<rect x="1881.5" y="1058.2" width="11" height="1.1" fill="#1d2b38" />
<rect x="1881.5" y="1061.2" width="11" height="1.1" fill="#1d2b38" />
<circle cx="1892" cy="1064" r="3" fill="#1d2b38"/>
<circle cx="1892" cy="1064" r="2" fill="#fff"/>
<rect x="1915" y="1040" width="1" height="40" fill="#48565f" />
</svg></body></html>
